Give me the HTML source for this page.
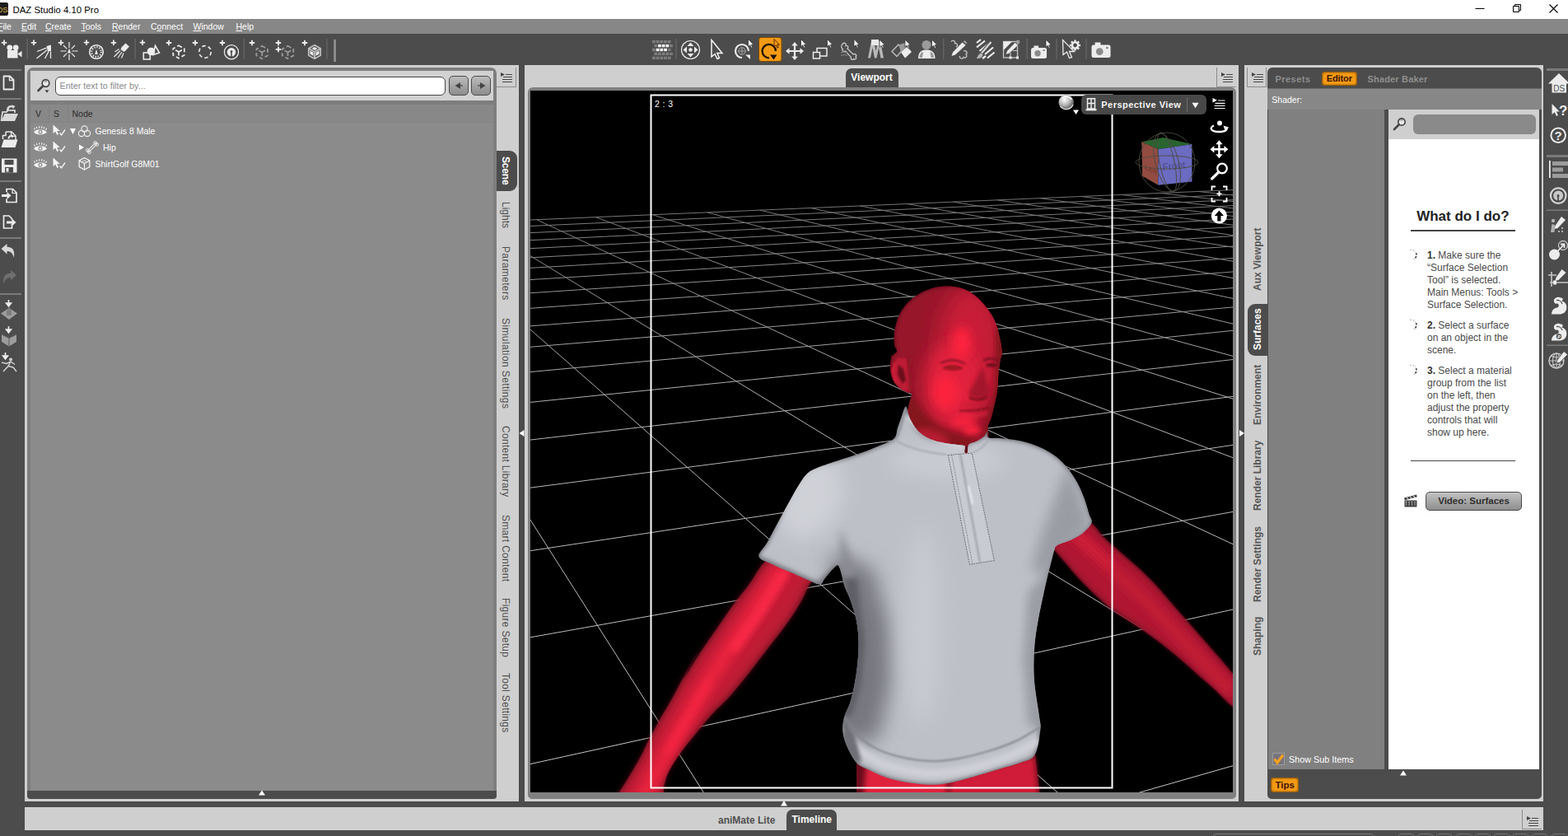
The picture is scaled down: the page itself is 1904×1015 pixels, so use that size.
<!DOCTYPE html><html><head><meta charset="utf-8"><title>DAZ Studio 4.10 Pro</title><style>

html,body{margin:0;padding:0}
body{width:1904px;height:1015px;overflow:hidden;background:#4c4c4c;position:relative;font-family:"Liberation Sans",sans-serif;font-size:10.5px;color:#fff}
.a{position:absolute}
#title{left:0;top:0;width:1904px;height:23px;background:#fff;color:#000}
#title .t{left:15.500px;top:5.500px;font-size:11.4px;white-space:nowrap}
#menu{left:0;top:23px;width:1904px;height:18px;background:#878787}
#menu span{position:absolute;top:3px;font-size:10.5px;color:#fff;white-space:nowrap}
#menu u{text-decoration:underline;text-underline-offset:1px}
#tb{left:0;top:41px;width:1904px;height:38px;background:#4c4c4c}
.sep{position:absolute;top:47px;width:1px;height:24px;background:#666}
.pane{position:absolute;background:#cfcfcf}
.vt{position:absolute;white-space:nowrap;font-size:11.5px;color:#555;transform-origin:0 0;letter-spacing:.1px}
.vt.r{transform:rotate(90deg)}
.vt.l{transform:rotate(-90deg)}
.menubtn{position:absolute;width:24px;height:24px;border-right:1px solid #8c8c8c;border-bottom:1px solid #8c8c8c;box-sizing:border-box}
#vp{position:absolute;left:644px;top:110px;width:853px;height:852px;background:#000;overflow:hidden}
.tip{font-size:12px;line-height:15px;color:#4a4a4a;white-space:nowrap}.tip b{color:#333}
</style></head><body>

<div id="title" class="a">
 <svg class="a" style="left:0;top:3px" width="10" height="16" viewBox="0 0 10 16"><rect x="-8" y="0" width="18" height="16" rx="2" fill="#1c1c1c"/><text x="-3.5" y="11.5" font-family="Liberation Sans, sans-serif" font-size="9.5" fill="#d8b040">DS</text></svg>
 <div class="a t">DAZ Studio 4.10 Pro</div>
 <svg class="a" style="left:1780px;top:0" width="124" height="23" viewBox="0 0 124 23">
  <path d="M11.5 10.5H22.5" stroke="#000" stroke-width="1"/>
  <path d="M57.5 7.5H64.5V14.5H57.5ZM59.5 7.5V5.5H66.5V12.5H64.5" stroke="#000" stroke-width="1" fill="none"/>
  <path d="M101.5 5.5L111.5 15.5M111.5 5.5L101.5 15.5" stroke="#000" stroke-width="1.1"/>
 </svg>
</div>
<div id="menu" class="a">
 <span style="left:-3px"><u>F</u>ile</span><span style="left:26px"><u>E</u>dit</span><span style="left:55px"><u>C</u>reate</span><span style="left:98.5px"><u>T</u>ools</span><span style="left:136px"><u>R</u>ender</span><span style="left:183px">C<u>o</u>nnect</span><span style="left:234.5px"><u>W</u>indow</span><span style="left:286.5px"><u>H</u>elp</span>
</div>
<div id="tb" class="a"></div>
<svg class="a" style="left:0;top:0;pointer-events:none" width="1904" height="1015" viewBox="0 0 1904 1015"><rect x="32.5" y="47" width="1.4" height="25" fill="#646464"/>
<rect x="163.5" y="47" width="1.4" height="25" fill="#646464"/>
<rect x="295.7" y="47" width="1.4" height="25" fill="#646464"/>
<rect x="396.3" y="47" width="1.4" height="25" fill="#646464"/>
<rect x="405.2" y="48" width="2.8" height="27" fill="#8e8e8e"/>
<rect x="820.3" y="47" width="1.4" height="25" fill="#646464"/>
<rect x="1145.0" y="47" width="1.4" height="25" fill="#646464"/>
<rect x="1246.5" y="47" width="1.4" height="25" fill="#646464"/>
<rect x="1282.3" y="47" width="1.4" height="25" fill="#646464"/>
<rect x="1318.3" y="47" width="1.4" height="25" fill="#646464"/>
<path d="M1.8 51.8H8.2M5.0 48.6V55.0" stroke="#ececec" stroke-width="1.8"/>
<circle cx="11.8" cy="57.8" r="3.4" fill="#ececec"/><circle cx="19.2" cy="57.8" r="3.4" fill="#ececec"/><rect x="9" y="61" width="12.5" height="9.5" fill="#ececec"/><path d="M21.5 65.5L26.5 61.8V69.5Z" fill="#ececec"/>
<path d="M37.8 51.8H44.2M41.0 48.6V55.0" stroke="#ececec" stroke-width="1.8"/>
<path d="M56.5 56L62 54.5V62L58 62.5Z" fill="#ececec"/><path d="M56.5 58.2L45 62.5M57 60.8L44.5 71M59 62.5L54.5 71M61.5 62.5V71" stroke="#ececec" stroke-width="1.3"/>
<path d="M70.8 51.8H77.2M74.0 48.6V55.0" stroke="#ececec" stroke-width="1.8"/>
<path d="M84 51V58M84 66V73M73.5 62H80.5M87.5 62H94.5M77 55L81.3 59.3M86.7 64.7L91 69M91 55L86.7 59.3M81.3 64.7L77 69" stroke="#ececec" stroke-width="1.2"/><path d="M84 58.5L86 64.5H82Z" fill="#ececec"/>
<path d="M101.8 51.6H108.2M105.0 48.4V54.8" stroke="#ececec" stroke-width="1.8"/>
<circle cx="117" cy="63" r="8.3" fill="none" stroke="#ececec" stroke-width="1.6"/><circle cx="117" cy="63" r="5.8" fill="none" stroke="#ececec" stroke-width="2.2" stroke-dasharray="1.3 1.7"/><path d="M117 59.5L118.8 66H115.2Z" fill="#ececec"/>
<path d="M134.8 51.8H141.2M138.0 48.6V55.0" stroke="#ececec" stroke-width="1.8"/>
<path d="M152.5 52.5L157 56.5L152.5 61.5L150.5 63L146.5 60L147.5 57.5Z" fill="#ececec"/><path d="M146 61.5L138.5 69M148 63L143 70.5M150 64.5L147.5 70.5M144.5 59.5L139.5 63" stroke="#ececec" stroke-width="1.2"/>
<path d="M169.8 51.6H176.2M173.0 48.4V54.8" stroke="#ececec" stroke-width="1.8"/>
<rect x="174.3" y="64" width="8" height="8" fill="none" stroke="#ececec" stroke-width="1.6"/><path d="M188.5 55.5L193.5 64L186 66.5Z" fill="none" stroke="#ececec" stroke-width="1.6"/><circle cx="183.5" cy="62.5" r="4.8" fill="#ececec"/>
<path d="M201.8 52.0H208.2M205.0 48.8V55.2" stroke="#ececec" stroke-width="1.8"/>
<path d="M217.0 55.2L223.8 59.1L223.8 66.9L217.0 70.8L210.2 66.9L210.2 59.1ZM217.0 63.0L223.8 59.1M217.0 63.0L210.2 59.1M217.0 63.0L217.0 70.8" fill="none" stroke="#ececec" stroke-width="1.7" stroke-dasharray="4.5 3" stroke-linejoin="round"/>
<path d="M233.8 52.0H240.2M237.0 48.8V55.2" stroke="#ececec" stroke-width="1.8"/>
<circle cx="249" cy="63" r="7.3" fill="none" stroke="#ececec" stroke-width="1.7" stroke-dasharray="4.5 3.1"/>
<path d="M266.8 52.0H273.2M270.0 48.8V55.2" stroke="#ececec" stroke-width="1.8"/>
<circle cx="281" cy="63.2" r="8.6" fill="none" stroke="#ececec" stroke-width="1.2"/><circle cx="281" cy="63.2" r="5.2" fill="#ececec"/><path d="M281 63V69" stroke="#4c4c4c" stroke-width="1.6"/><circle cx="281" cy="62.6" r="1.4" fill="#4c4c4c"/>
<path d="M302.8 52.0H309.2M306.0 48.8V55.2" stroke="#ececec" stroke-width="1.8"/>
<path d="M318.2 55.7L325.0 59.6L325.0 67.4L318.2 71.3L311.4 67.4L311.4 59.6ZM318.2 63.5L325.0 59.6M318.2 63.5L311.4 59.6M318.2 63.5L318.2 71.3" fill="none" stroke="#9a9a9a" stroke-width="1.8" stroke-dasharray="4.5 3" stroke-linejoin="round"/>
<path d="M334.8 52.0H341.2M338.0 48.8V55.2" stroke="#ececec" stroke-width="1.8"/>
<path d="M334.8 60.0H341.2M338.0 56.8V63.2" stroke="#ececec" stroke-width="1.8"/>
<path d="M349.5 55.7L356.3 59.6L356.3 67.4L349.5 71.3L342.7 67.4L342.7 59.6ZM349.5 63.5L356.3 59.6M349.5 63.5L342.7 59.6M349.5 63.5L349.5 71.3" fill="none" stroke="#9a9a9a" stroke-width="1.8" stroke-dasharray="4.5 3" stroke-linejoin="round"/>
<path d="M366.8 52.0H373.2M370.0 48.8V55.2" stroke="#ececec" stroke-width="1.8"/>
<path d="M382.0 54.7L389.2 58.9L389.2 67.2L382.0 71.3L374.8 67.2L374.8 58.9ZM382.0 63.0L389.2 58.9M382.0 63.0L374.8 58.9M382.0 63.0L382.0 71.3" fill="none" stroke="#bdbdbd" stroke-width="1.8" stroke-linejoin="round"/>
<path d="M382 57L385.5 59L382 61L378.5 59Z" fill="#ececec"/><path d="M376.5 61.5L380.5 63.8V68L376.5 65.5Z" fill="#ececec"/><path d="M387.5 61.5L383.5 63.8V68L387.5 65.5Z" fill="#ececec"/>
<rect x="792.0" y="49.0" width="3.8" height="3.4" fill="#7c7c7c"/>
<rect x="796.7" y="49.0" width="3.8" height="3.4" fill="#7c7c7c"/>
<rect x="801.4" y="49.0" width="3.8" height="3.4" fill="#7c7c7c"/>
<rect x="806.1" y="49.0" width="3.8" height="3.4" fill="#7c7c7c"/>
<rect x="810.8" y="49.0" width="3.8" height="3.4" fill="#7c7c7c"/>
<rect x="794.3" y="53.9" width="3.8" height="3.4" fill="#7c7c7c"/>
<rect x="799.0" y="53.9" width="3.8" height="3.4" fill="#f2f2f2"/>
<rect x="803.7" y="53.9" width="3.8" height="3.4" fill="#f2f2f2"/>
<rect x="808.4" y="53.9" width="3.8" height="3.4" fill="#f2f2f2"/>
<rect x="813.1" y="53.9" width="3.8" height="3.4" fill="#7c7c7c"/>
<rect x="792.0" y="58.8" width="3.8" height="3.4" fill="#7c7c7c"/>
<rect x="796.7" y="58.8" width="3.8" height="3.4" fill="#f2f2f2"/>
<rect x="801.4" y="58.8" width="3.8" height="3.4" fill="#f2f2f2"/>
<rect x="806.1" y="58.8" width="3.8" height="3.4" fill="#f2f2f2"/>
<rect x="810.8" y="58.8" width="3.8" height="3.4" fill="#7c7c7c"/>
<rect x="794.3" y="63.7" width="3.8" height="3.4" fill="#7c7c7c"/>
<rect x="799.0" y="63.7" width="3.8" height="3.4" fill="#7c7c7c"/>
<rect x="803.7" y="63.7" width="3.8" height="3.4" fill="#7c7c7c"/>
<rect x="808.4" y="63.7" width="3.8" height="3.4" fill="#7c7c7c"/>
<rect x="813.1" y="63.7" width="3.8" height="3.4" fill="#7c7c7c"/>
<rect x="792.0" y="68.6" width="3.8" height="3.4" fill="#7c7c7c"/>
<rect x="796.7" y="68.6" width="3.8" height="3.4" fill="#7c7c7c"/>
<rect x="801.4" y="68.6" width="3.8" height="3.4" fill="#7c7c7c"/>
<rect x="806.1" y="68.6" width="3.8" height="3.4" fill="#7c7c7c"/>
<rect x="810.8" y="68.6" width="3.8" height="3.4" fill="#7c7c7c"/>
<circle cx="838.5" cy="60.5" r="11" fill="none" stroke="#ececec" stroke-width="1.2"/>
<path d="M838.5 51.5l4 4.5h-8ZM838.5 69.5l4 -4.5h-8ZM829.5 60.5l4.5 -4v8ZM847.5 60.5l-4.5 -4v8Z" fill="#ececec"/><circle cx="838.5" cy="60.5" r="2.2" fill="#ececec"/>
<path d="M864 48.5V69L868 65.5L871 71.5L873.5 70.3L870.8 64.5H877Z" fill="#4c4c4c" stroke="#fff" stroke-width="1.4" stroke-linejoin="miter"/>
<path d="M909 62A8 8 0 1 0 901 70" fill="none" stroke="#ececec" stroke-width="2.2"/><path d="M905 66.5H911V72Z" fill="#ececec"/><circle cx="901" cy="62" r="4.2" fill="none" stroke="#aaa" stroke-width="1"/><path d="M901 57.5V66.5M896.5 62H905.5" stroke="#aaa" stroke-width="1"/>
<path d="M908.5 47.5L908.5 56.9L910.7 54.8L912.4 58.2L913.8 57.5L912.2 54.3L915.0 54.3Z" fill="#fff" stroke="#333" stroke-width="0.8"/>
<rect x="921.5" y="45.5" width="27.5" height="29" rx="3" fill="#f39a14" stroke="#7a4a08" stroke-width="1"/>
<path d="M942 62A8.2 8.2 0 1 0 934 70.3" fill="none" stroke="#1e1208" stroke-width="2.3"/><path d="M935 66.5H943.5L939.5 72.5Z" fill="#1e1208"/>
<path d="M940.0 47.5L940.0 56.9L942.2 54.8L943.9 58.2L945.3 57.5L943.7 54.3L946.5 54.3Z" fill="#f39a14" stroke="#3a1208" stroke-width="0.8"/>
<path d="M965.0 54.0V70.0M957.0 62.0H973.0" stroke="#ececec" stroke-width="2.2"/>
<path d="M965.0 51.0l3.8 4.5h-7.6ZM965.0 73.0l3.8 -4.5h-7.6ZM954.0 62.0l4.5 -3.8v7.6ZM976.0 62.0l-4.5 -3.8v7.6Z" fill="#ececec"/>
<path d="M972.5 47.5L972.5 56.9L974.7 54.8L976.4 58.2L977.8 57.5L976.2 54.3L979.0 54.3Z" fill="#fff" stroke="#333" stroke-width="0.8"/>
<rect x="992" y="58.5" width="12" height="9.5" fill="none" stroke="#ececec" stroke-width="1.5"/><rect x="987.5" y="63.5" width="8" height="7.5" fill="#4c4c4c" stroke="#ececec" stroke-width="1.5"/>
<path d="M1004.5 47.5L1004.5 56.9L1006.7 54.8L1008.4 58.2L1009.8 57.5L1008.2 54.3L1011.0 54.3Z" fill="#fff" stroke="#333" stroke-width="0.8"/>
<path d="M1023 53.5C1025 51 1028.5 53 1027 55.5C1029.5 55 1031 57.5 1029 59L1036 66C1038.5 64.5 1041 67 1039 69C1041 70.5 1038 73.5 1036.5 71.5C1035.5 73.5 1032 72 1033.5 69.5L1026.5 62C1024 63.5 1021.5 61 1023.5 59.5C1021 58.5 1021.5 55 1023 53.5Z" fill="none" stroke="#c8c8c8" stroke-width="1.3"/>
<path d="M1021 64q4 -2 8 0M1021 67.5q4 -2 8 0" stroke="#8a8a8a" stroke-width="1" fill="none"/>
<path d="M1037.0 47.5L1037.0 56.9L1039.2 54.8L1040.9 58.2L1042.3 57.5L1040.7 54.3L1043.5 54.3Z" fill="#fff" stroke="#333" stroke-width="0.8"/>
<path d="M1054 70.5L1058 50H1061.5L1063.5 62L1066 50H1069L1073 70.5H1069.5L1067 58L1064.5 70.5H1062L1059.5 58L1057 70.5Z" fill="#b8b8b8"/><rect x="1058" y="48" width="9" height="7" fill="#e8e8e8"/>
<path d="M1068.0 48.0L1068.0 57.4L1070.2 55.3L1071.9 58.7L1073.3 58.0L1071.7 54.8L1074.5 54.8Z" fill="#fff" stroke="#333" stroke-width="0.8"/>
<path d="M1083 62.5L1091 54L1097 59.5L1089 68.5Z" fill="none" stroke="#c0c0c0" stroke-width="1.4"/><path d="M1091 54.5L1099 52L1101 60L1094 63Z" fill="#9a9a9a"/><path d="M1094 63.5L1101.5 57L1107 63L1099 70.5Z" fill="#ececec"/>
<path d="M1099.0 48.0L1099.0 57.4L1101.2 55.3L1102.9 58.7L1104.3 58.0L1102.7 54.8L1105.5 54.8Z" fill="#fff" stroke="#333" stroke-width="0.8"/>
<circle cx="1125" cy="54.5" r="5.6" fill="#9a9a9a"/><path d="M1115 71C1115 63 1119 60.5 1125 60.5C1131 60.5 1135.5 63 1135.5 71Z" fill="#ececec"/><path d="M1116.5 70C1117 65 1118.5 63.5 1121 63L1120 70ZM1134 70C1133.5 65 1132 63.5 1129.5 63L1130.5 70Z" fill="#9a9a9a"/>
<path d="M1131.5 48.0L1131.5 57.4L1133.7 55.3L1135.4 58.7L1136.8 58.0L1135.2 54.8L1138.0 54.8Z" fill="#fff" stroke="#333" stroke-width="0.8"/>
<path d="M1155 50.5c2.5-3 6 0 4 2.5c3-1.5 5 2.5 2 4M1170 62c3-1.5 5.500 2 3 4c2.5 2-1 5.500-3 3.500c-1 3-5.500 1.500-4.500-1.500" fill="none" stroke="#c8c8c8" stroke-width="1.3"/><path d="M1168.500 51.500L1172.500 55L1160 66.500L1155.500 68L1157 63.500Z" fill="#ececec"/><path d="M1169.500 50.500L1171.500 49L1174.500 51.800L1173.200 53.800Z" fill="#9a9a9a"/>
<path d="M1186 52L1191 48M1186 57.500L1196 49.500M1189.500 62L1202 51.500M1196 66L1206 57.500M1199 70.500L1207.500 63.500M1193 71L1197 68" stroke="#ececec" stroke-width="2.200"/>
<path d="M1203 51.500L1190.500 66.500" stroke="#4c4c4c" stroke-width="4.500"/><path d="M1203.500 51L1192 64.500" stroke="#d8d8d8" stroke-width="2.200"/><path d="M1191.500 64.500C1188 65 1187.500 69 1185.500 71C1189 71.500 1193 70 1193.500 66.500Z" fill="#b8b8b8"/>
<rect x="1218.5" y="50.5" width="17" height="19.500" fill="none" stroke="#c8c8c8" stroke-width="1.300"/><path d="M1218.500 50.500H1229L1218.500 61Z" fill="#ececec"/><path d="M1227 61.500V70M1227 61.500H1235.500" stroke="#c8c8c8" stroke-width="1.200"/><path d="M1232.500 51.500L1236.500 55L1225.500 65L1221 66.500L1222.500 62Z" fill="#ececec" stroke="#4c4c4c" stroke-width="0.800"/><circle cx="1236" cy="51" r="2.400" fill="#9a9a9a"/><rect x="1225.500" y="68.500" width="3" height="3" fill="#ececec"/><rect x="1234" y="68.500" width="3" height="3" fill="#ececec"/>
<rect x="1252.0" y="58.0" width="19.0" height="13.0" rx="2.500" fill="#ececec"/><rect x="1255.4" y="55.5" width="5.7" height="4.6" fill="#ececec"/><circle cx="1260.0" cy="64.8" r="3.7" fill="#8a8a8a"/><rect x="1266.4" y="60.1" width="2.3" height="1.9" fill="#8a8a8a"/>
<path d="M1270.0 48.0L1270.0 57.4L1272.2 55.3L1273.9 58.7L1275.3 58.0L1273.7 54.8L1276.5 54.8Z" fill="#fff" stroke="#333" stroke-width="0.8"/>
<path d="M1290.500 48.500L1291 66.500L1295.500 63L1298.500 70.500L1301.500 69.500L1298.500 62.500H1304.500Z" fill="none" stroke="#ececec" stroke-width="1.300"/>
<path d="M1308.6 55.0L1312.0 55.0" stroke="#ececec" stroke-width="2.400"/><path d="M1307.7 57.2L1310.1 59.6" stroke="#ececec" stroke-width="2.400"/><path d="M1305.5 58.1L1305.5 61.5" stroke="#ececec" stroke-width="2.400"/><path d="M1303.3 57.2L1300.9 59.6" stroke="#ececec" stroke-width="2.400"/><path d="M1302.4 55.0L1299.0 55.0" stroke="#ececec" stroke-width="2.400"/><path d="M1303.3 52.8L1300.9 50.4" stroke="#ececec" stroke-width="2.400"/><path d="M1305.5 51.9L1305.5 48.5" stroke="#ececec" stroke-width="2.400"/><path d="M1307.7 52.8L1310.1 50.4" stroke="#ececec" stroke-width="2.400"/><circle cx="1305.5" cy="55.0" r="3.6" fill="none" stroke="#ececec" stroke-width="2.400"/>
<rect x="1325.5" y="54.5" width="23.0" height="15.5" rx="2.500" fill="#ececec"/><rect x="1329.6" y="51.5" width="6.9" height="5.5" fill="#ececec"/><circle cx="1335.2" cy="62.6" r="4.4" fill="#8a8a8a"/><rect x="1343.0" y="57.0" width="2.8" height="2.2" fill="#8a8a8a"/><rect x="0" y="84" width="26" height="2" fill="#7a7a7a"/>
<rect x="0" y="119" width="26" height="2" fill="#7a7a7a"/>
<rect x="0" y="219" width="26" height="2" fill="#7a7a7a"/>
<rect x="0" y="288" width="26" height="2" fill="#7a7a7a"/>
<rect x="0" y="356" width="26" height="2" fill="#7a7a7a"/>
<path d="M4.500 92.500H12L16.500 97V108.500H4.500Z" fill="none" stroke="#ececec" stroke-width="1.800" stroke-linejoin="round"/><path d="M11.500 92.500V97.500H16.500" fill="none" stroke="#ececec" stroke-width="1.400"/>
<path d="M1.500 147L3 136H8L9.500 134H18V137" fill="none" stroke="#ececec" stroke-width="1.500"/><path d="M1.500 147L5.500 138H22L18 147Z" fill="#d8d8d8"/><path d="M8 134C8 129 12 127 15 128.500L14 127L18.500 129L15.500 132.500L15.200 130.500C13 129.500 10.500 131 10.500 134Z" fill="#d8d8d8"/>
<path d="M7 160H14L19 165V170M3.500 169V164.500H7V160" fill="none" stroke="#ececec" stroke-width="1.500"/><path d="M13.500 160V165.500H19" fill="none" stroke="#ececec" stroke-width="1.200"/><path d="M1.500 179L4.500 169.500H21.500L18.500 179Z" fill="#ececec"/><path d="M9.500 168.500C9.500 165 12 163.500 14 164.500L13.500 163L17 165L14.500 168L14.300 166.200C12.800 165.800 11.500 166.800 11.500 168.500Z" fill="#ececec"/>
<path d="M2 192.500H20.500V209.500H2Z" fill="#ececec"/><rect x="5.500" y="194" width="11" height="6" fill="#4c4c4c"/><rect x="6" y="203" width="10" height="6.500" fill="#4c4c4c"/><rect x="7.500" y="204" width="3" height="4.500" fill="#ececec"/>
<path d="M8 233V229.500H15.500L20 234V245.500H8V241.500" fill="none" stroke="#ececec" stroke-width="1.700"/><path d="M15 229.500V234.500H20" fill="none" stroke="#ececec" stroke-width="1.200"/><path d="M2 236H8.500V233L13.500 237.500L8.500 242V239H2Z" fill="#ececec"/>
<path d="M14.500 272V277H4.500V262H11L14.500 265.500V267" fill="none" stroke="#ececec" stroke-width="1.700"/><path d="M8 268.500H14.500V265.500L19.500 270L14.500 274.500V271.500H8Z" fill="#ececec"/>
<path d="M1.500 302L8.500 296V299.800C14.500 299.800 18.500 303 17 313C15.500 307.500 13 305 8.500 305V308.500Z" fill="#d8d8d8"/>
<path d="M20 334L13 328V331.800C7 331.800 3 335 4.500 345C6 339.500 8.500 337 13 337V340.500Z" fill="#6e6e6e"/>
<path d="M10.500 364V370M7.500 368L10.500 372L13.500 368Z" stroke="#ececec" stroke-width="1.600" fill="#ececec"/><path d="M1 380.500L11 374L21 380.500L11 388Z" fill="#9c9c9c"/><path d="M8 378L11 372.500L14 378V383H8Z" fill="#7e7e7e"/>
<path d="M10.500 396V402M7.500 400L10.500 404L13.500 400Z" stroke="#ececec" stroke-width="1.600" fill="#ececec"/><path d="M2 406L11 410.500L20 406V415L11 420.500L2 415Z" fill="#9c9c9c"/><path d="M11 410.500V420M2 406L11 410.500L20 406" stroke="#5c5c5c" stroke-width="1" fill="none"/>
<path d="M6.500 428V434M3.500 432L6.500 436L9.500 432Z" stroke="#ececec" stroke-width="1.600" fill="#ececec"/><circle cx="13" cy="436.500" r="2" fill="#d0d0d0"/><path d="M2 440L8 441.500L13 439L18 442.500M13 439L10 444.500L4 451M10 444.500L16 446L20 451" stroke="#d0d0d0" stroke-width="1.500" fill="none"/><rect x="1878" y="83" width="26" height="3" fill="#7a7a7a"/>
<rect x="1878" y="188" width="26" height="3" fill="#7a7a7a"/>
<rect x="1878" y="254.5" width="26" height="1.5" fill="#7a7a7a"/>
<rect x="1878" y="418.5" width="26" height="1.5" fill="#7a7a7a"/>
<path d="M1880 101.500L1893 89L1906 101.500Z" fill="#ececec"/><rect x="1884.500" y="100" width="17.500" height="12.500" fill="#ececec"/><text x="1886.300" y="110.800" font-family="Liberation Sans, sans-serif" font-size="10" fill="#4c4c4c">DS</text>
<path d="M1884.500 126V139L1887.700 136.300L1890 141L1892 140L1889.800 135.500H1893.700Z" fill="#ececec"/><text x="1893" y="140" font-family="Liberation Sans, sans-serif" font-weight="700" font-size="17" fill="#ececec">?</text>
<circle cx="1892.200" cy="164.300" r="8.800" fill="none" stroke="#ececec" stroke-width="2"/><text x="1887.600" y="170" font-family="Liberation Sans, sans-serif" font-weight="700" font-size="15" fill="#ececec">?</text>
<rect x="1881" y="195" width="1.800" height="21" fill="#ececec"/><rect x="1885" y="196" width="19" height="5" fill="#9c9c9c"/><rect x="1885" y="203.500" width="13" height="5" fill="#9c9c9c"/><rect x="1885" y="211" width="19" height="5" fill="#9c9c9c"/>
<circle cx="1892.200" cy="237.600" r="9.300" fill="none" stroke="#d4d4d4" stroke-width="2.200"/><circle cx="1892.200" cy="237.600" r="6" fill="#c8c8c8"/><path d="M1892 238V245" stroke="#4c4c4c" stroke-width="1.800"/><circle cx="1892" cy="237.500" r="1.600" fill="#4c4c4c"/>
<path d="M1896 263L1901 267L1891.500 277L1887.500 278L1888.500 274Z" fill="#ececec"/><circle cx="1886" cy="268" r="2.200" fill="#b0b0b0"/><path d="M1883 282L1884.500 272L1888 273L1887.500 282" fill="#b0b0b0"/><path d="M1892 280h2v2h-2zM1896 280h2v2h-2zM1896 276h2v2h-2z" fill="#b0b0b0"/>
<circle cx="1887.500" cy="309" r="6.500" fill="#ececec"/><circle cx="1898" cy="298" r="5.500" fill="none" stroke="#c8c8c8" stroke-width="1.300"/><path d="M1890 306.500L1899 297M1895 296.500H1899.500V301" stroke="#ececec" stroke-width="1.800" fill="none"/>
<path d="M1896.500 327L1901.500 331L1892.500 340L1888.500 341L1889.500 337Z" fill="#ececec"/><path d="M1884 330V348M1880 334H1890M1882 343H1904" stroke="#c8c8c8" stroke-width="1.600"/><rect x="1886" y="340.500" width="4" height="5" fill="#ececec"/>
<path d="M1887 366.0C1886 362.0 1892 359.5 1895 361.5C1898.500 361.0 1898.500 365.0 1895.500 366.0C1899 365.0 1902.800 369.0 1902.300 374.0C1902 379.0 1898 381.5 1893 381.5L1884 381.5C1884 377.0 1887 374.0 1891 373.5C1893.500 372.0 1893.500 369.5 1891 368.5C1889 369.0 1887 368.0 1887 366.0Z" fill="#ececec"/>
<path d="M1890 364.5C1893 364.0 1896 366.0 1897 369.0" stroke="#4c4c4c" stroke-width="1.300" fill="none"/>
<path d="M1887 398.0C1886 394.0 1892 391.5 1895 393.5C1898.500 393.0 1898.500 397.0 1895.500 398.0C1899 397.0 1902.800 401.0 1902.300 406.0C1902 411.0 1898 413.5 1893 413.5L1884 413.5C1884 409.0 1887 406.0 1891 405.5C1893.500 404.0 1893.500 401.5 1891 400.5C1889 401.0 1887 400.0 1887 398.0Z" fill="#ececec"/>
<path d="M1890 396.5C1893 396.0 1896 398.0 1897 401.0" stroke="#4c4c4c" stroke-width="1.300" fill="none"/>
<circle cx="1893" cy="408.5" r="3.200" fill="#4c4c4c"/><text x="1891.300" y="410.5" font-family="Liberation Sans, sans-serif" font-weight="700" font-style="italic" font-size="5.500" fill="#fff">P</text>
<circle cx="1890" cy="438" r="9" fill="none" stroke="#c8c8c8" stroke-width="1.500"/><path d="M1881 438H1899M1890 429V447M1883.500 432Q1890 436 1896.500 432M1883.500 444Q1890 440 1896.500 444" stroke="#c8c8c8" stroke-width="1.100" fill="none"/><ellipse cx="1890" cy="438" rx="4.500" ry="9" fill="none" stroke="#c8c8c8" stroke-width="1.100"/><path d="M1899 426.500L1903.500 430.500L1894 440L1890 441L1891 437Z" fill="#ececec" stroke="#4c4c4c" stroke-width="0.800"/></svg>

<div class="pane" style="left:30px;top:79px;width:600px;height:894px"></div>
<div class="a" style="left:33px;top:82px;width:570px;height:888px;background:#7e7e7e;border-radius:7px 7px 4px 4px;overflow:hidden">
  <div class="a" style="left:4px;top:4px;width:562px;height:36px;background:#d2d2d2"></div>
  <div class="a" style="left:4px;top:45px;width:562px;height:833px;background:#8b8b8b"></div>
  <div class="a" style="left:4px;top:45px;width:562px;height:21px;background:#888;border-bottom:1px solid #838383"></div>
  <div class="a" style="left:26px;top:47px;width:1px;height:18px;background:#818181"></div>
  <div class="a" style="left:48.500px;top:47px;width:1px;height:18px;background:#818181"></div>
  <div class="a" style="left:0;top:878px;width:570px;height:10px;background:#4c4c4c"></div>
</div>
<svg class="a" style="left:313px;top:958px" width="10" height="8" viewBox="0 0 10 8"><path d="M1 7.500L5 1.500L9 7.500Z" fill="#fff"/></svg>
<svg class="a" style="left:44px;top:94px" width="20" height="20" viewBox="0 0 20 20"><circle cx="11.500" cy="7" r="4.300" fill="#e8e8e8" stroke="#444" stroke-width="1.700"/><path d="M8.300 10.300L2.500 16" stroke="#444" stroke-width="2.600" stroke-linecap="round"/><path d="M10 5.500A2.500 2.500 0 0 1 13 5" stroke="#444" stroke-width="0.800" fill="none"/><path d="M10.500 15.500H15.500L13 18.500Z" fill="#333"/></svg>
<div class="a" style="left:67px;top:92.500px;width:474px;height:23px;box-sizing:border-box;border:1.500px solid #454545;border-radius:6px;background:#fff"></div>
<div class="a" style="left:72.500px;top:98px;font-size:10.800px;color:#8a8a8a;white-space:nowrap">Enter text to filter by...</div>
<div class="a" style="left:545px;top:92px;width:24px;height:24px;box-sizing:border-box;border:1px solid #4c4c4c;border-radius:5px;background:linear-gradient(#bcbcbc,#8c8c8c)"><svg class="a" style="left:6px;top:6px" width="11" height="10" viewBox="0 0 11 10"><path d="M0.500 5L7 1V9Z" fill="#444"/><path d="M5 5H10" stroke="#444" stroke-width="1.200"/></svg></div>
<div class="a" style="left:572px;top:92px;width:24px;height:24px;box-sizing:border-box;border:1px solid #4c4c4c;border-radius:5px;background:linear-gradient(#bcbcbc,#8c8c8c)"><svg class="a" style="left:6px;top:6px" width="11" height="10" viewBox="0 0 11 10"><path d="M10.500 5L4 1V9Z" fill="#444"/><path d="M1 5H6" stroke="#444" stroke-width="1.200"/></svg></div>
<div class="a" style="left:43px;top:132px;font-size:10.500px;color:#2a2a2a">V</div>
<div class="a" style="left:65px;top:132px;font-size:10.500px;color:#2a2a2a">S</div>
<div class="a" style="left:87.500px;top:132px;font-size:10.500px;color:#2a2a2a">Node</div>
<svg class="a" style="left:40px;top:152px" width="18" height="13" viewBox="0 0 18 13"><path d="M1 8.500C4 4.500 13 4 17 8.500C13 12.500 4.500 12.500 1 8.500Z" fill="#f4f4f4"/><circle cx="9" cy="8.300" r="2.500" fill="#8b8b8b"/><circle cx="9" cy="8.300" r="1.200" fill="#f4f4f4"/><path d="M2.500 5.500L1.500 3.500M5 4.200L4.300 2M7.700 3.600V1.200M10.500 3.600L11 1.200M13 4.300L14 2.200M15.300 5.600L16.800 3.800" stroke="#f4f4f4" stroke-width="1.100"/></svg>
<svg class="a" style="left:63px;top:151px" width="18" height="15" viewBox="0 0 18 15"><path d="M1.500 0.500V11L4.300 8.800L6.300 13L8.200 12L6.200 8H9.800Z" fill="#f4f4f4"/><path d="M9.500 10.500L11.500 12.800L16 6.500" fill="none" stroke="#f4f4f4" stroke-width="1.400"/></svg>
<div class="a" style="left:115.5px;top:153px;font-size:10.500px;white-space:nowrap;color:#fff">Genesis 8 Male</div>
<svg class="a" style="left:40px;top:172px" width="18" height="13" viewBox="0 0 18 13"><path d="M1 8.500C4 4.500 13 4 17 8.500C13 12.500 4.500 12.500 1 8.500Z" fill="#f4f4f4"/><circle cx="9" cy="8.300" r="2.500" fill="#8b8b8b"/><circle cx="9" cy="8.300" r="1.200" fill="#f4f4f4"/><path d="M2.500 5.500L1.500 3.500M5 4.200L4.300 2M7.700 3.600V1.200M10.500 3.600L11 1.200M13 4.300L14 2.200M15.300 5.600L16.800 3.800" stroke="#f4f4f4" stroke-width="1.100"/></svg>
<svg class="a" style="left:63px;top:171px" width="18" height="15" viewBox="0 0 18 15"><path d="M1.500 0.500V11L4.300 8.800L6.300 13L8.200 12L6.200 8H9.800Z" fill="#f4f4f4"/><path d="M9.500 10.500L11.500 12.800L16 6.500" fill="none" stroke="#f4f4f4" stroke-width="1.400"/></svg>
<div class="a" style="left:125.0px;top:173px;font-size:10.500px;white-space:nowrap;color:#fff">Hip</div>
<svg class="a" style="left:40px;top:192px" width="18" height="13" viewBox="0 0 18 13"><path d="M1 8.500C4 4.500 13 4 17 8.500C13 12.500 4.500 12.500 1 8.500Z" fill="#f4f4f4"/><circle cx="9" cy="8.300" r="2.500" fill="#8b8b8b"/><circle cx="9" cy="8.300" r="1.200" fill="#f4f4f4"/><path d="M2.500 5.500L1.500 3.500M5 4.200L4.300 2M7.700 3.600V1.200M10.500 3.600L11 1.200M13 4.300L14 2.200M15.300 5.600L16.800 3.800" stroke="#f4f4f4" stroke-width="1.100"/></svg>
<svg class="a" style="left:63px;top:191px" width="18" height="15" viewBox="0 0 18 15"><path d="M1.500 0.500V11L4.300 8.800L6.300 13L8.200 12L6.200 8H9.800Z" fill="#f4f4f4"/><path d="M9.500 10.500L11.500 12.800L16 6.500" fill="none" stroke="#f4f4f4" stroke-width="1.400"/></svg>
<div class="a" style="left:115.5px;top:193px;font-size:10.500px;white-space:nowrap;color:#fff">ShirtGolf G8M01</div>
<svg class="a" style="left:84px;top:150px" width="40" height="60" viewBox="84 150 40 60"><path d="M85 156H92L88.500 163Z" fill="#fff"/><circle cx="102.500" cy="156.500" r="3.600" fill="none" stroke="#f0f0f0" stroke-width="1.100"/><circle cx="99" cy="162" r="3.600" fill="none" stroke="#f0f0f0" stroke-width="1.100"/><circle cx="106" cy="162" r="3.600" fill="none" stroke="#f0f0f0" stroke-width="1.100"/><path d="M96 175.500V182.500L102 179Z" fill="#fff"/><path d="M107.500 183.500L116.500 174.500" stroke="#f0f0f0" stroke-width="3.400" stroke-linecap="round"/><path d="M107.500 183.500L116.500 174.500" stroke="#8b8b8b" stroke-width="1.400" stroke-linecap="round"/><circle cx="106.300" cy="182.500" r="1.800" fill="none" stroke="#f0f0f0" stroke-width="1"/><circle cx="108.500" cy="184.800" r="1.800" fill="none" stroke="#f0f0f0" stroke-width="1"/><circle cx="115.500" cy="173.300" r="1.800" fill="none" stroke="#f0f0f0" stroke-width="1"/><circle cx="117.800" cy="175.500" r="1.800" fill="none" stroke="#f0f0f0" stroke-width="1"/><path d="M102.500 191.500L108.800 195V202.500L102.500 206L96.200 202.500V195Z" fill="none" stroke="#f4f4f4" stroke-width="1.300"/><path d="M96.200 195L102.500 198.500L108.800 195M102.500 198.500V206" stroke="#f4f4f4" stroke-width="1.100" fill="none"/><path d="M99 196.800L102.500 194.800L106 196.800" stroke="#f4f4f4" stroke-width="0.900" fill="none"/></svg><div class="menubtn" style="left:603px;top:82px"><svg class="a" style="left:5px;top:6px" width="15" height="12" viewBox="0 0 15 12"><path d="M0 0L5 2.5L0 5Z" fill="#444"/><path d="M6 2.5H14M3 5.5H14M2 8.5H14M2 11.5H14" stroke="#444" stroke-width="1"/></svg></div>
<div class="a" style="left:602.500px;top:182.500px;width:25px;height:49.500px;background:#4c4c4c;border-radius:0 9px 9px 0"></div>
<div class="vt r" style="left:620.5px;top:189.5px;color:#fff;font-weight:700;letter-spacing:-0.20px;font-size:12.0px">Scene</div><div class="vt r" style="left:620.5px;top:244.5px;color:#4f4f4f;font-weight:400;letter-spacing:0.00px;font-size:12.0px">Lights</div><div class="vt r" style="left:620.5px;top:299.4px;color:#4f4f4f;font-weight:400;letter-spacing:0.36px;font-size:12.0px">Parameters</div><div class="vt r" style="left:620.5px;top:386.3px;color:#4f4f4f;font-weight:400;letter-spacing:0.40px;font-size:12.0px">Simulation Settings</div><div class="vt r" style="left:620.5px;top:517.0px;color:#4f4f4f;font-weight:400;letter-spacing:0.30px;font-size:12.0px">Content Library</div><div class="vt r" style="left:620.5px;top:625.0px;color:#4f4f4f;font-weight:400;letter-spacing:0.30px;font-size:12.0px">Smart Content</div><div class="vt r" style="left:620.5px;top:726.0px;color:#4f4f4f;font-weight:400;letter-spacing:0.30px;font-size:12.0px">Figure Setup</div><div class="vt r" style="left:620.5px;top:817.0px;color:#4f4f4f;font-weight:400;letter-spacing:0.30px;font-size:12.0px">Tool Settings</div>
<svg class="a" style="left:629px;top:521px" width="8" height="10" viewBox="0 0 8 10"><path d="M7.500 1L1.500 5L7.500 9Z" fill="#fff"/></svg>


<div class="pane" style="left:637px;top:79px;width:867px;height:894px"></div>
<div class="a" style="left:1027px;top:82.500px;width:63.500px;height:26px;background:#4c4c4c;border-radius:7px 7px 0 0"></div>
<div class="a" style="left:1033.300px;top:87px;font-size:12px;font-weight:700;color:#fff">Viewport</div>
<div class="a" style="left:640.500px;top:106px;width:860px;height:863.500px;background:#808080;border-radius:6px 6px 5px 5px"></div>
<div class="menubtn" style="left:1477px;top:82px;border-right:none;border-left:1px solid #8c8c8c"><svg class="a" style="left:5px;top:6px" width="15" height="12" viewBox="0 0 15 12"><path d="M0 0L5 2.500L0 5Z" fill="#444"/><path d="M6 2.500H14M3 5.500H14M2 8.500H14M2 11.500H14" stroke="#444" stroke-width="1"/></svg></div>
<svg class="a" style="left:947px;top:971px" width="10" height="8" viewBox="0 0 10 8"><path d="M1 7.500L5 1L9 7.500Z" fill="#fff"/></svg>
<svg class="a" style="left:1504px;top:521px" width="8" height="10" viewBox="0 0 8 10"><path d="M1 1L7 5L1 9Z" fill="#fff"/></svg>

<div id="vp"><svg width="853" height="852" viewBox="644 110 853 852" style="position:absolute;left:0;top:0;display:block"><rect x="644" y="110" width="853" height="852" fill="#000"/><defs><linearGradient id="gg" gradientUnits="userSpaceOnUse" x1="0" y1="225" x2="0" y2="960"><stop offset="0" stop-color="#6c6c6c"/><stop offset="0.14" stop-color="#8a8a8a"/><stop offset="0.35" stop-color="#b0b0b0"/><stop offset="1" stop-color="#c6c6c6"/></linearGradient></defs><path d="M-42.5 296.3L2288.6 196.9M-60.6 305.9L2335.1 198.9M-80.6 316.6L2383.8 201.1M-103.0 328.5L2434.9 203.4M-128.1 341.8L2488.6 205.8M-156.3 356.8L2545.1 208.4M-188.5 373.9L2604.6 211.0M-225.4 393.6L2667.3 213.9M-268.3 416.4L2733.6 216.8M-318.5 443.1L2803.7 220.0M-378.3 474.8L2878.0 223.3M-450.6 513.3L2956.8 226.9M-539.8 560.7L3040.7 230.6M-652.7 620.8L3130.0 234.6M-800.2 699.2L3225.4 238.9M-1000.9 805.9L3327.5 243.5M-1290.0 959.7L3437.0 248.4M-1742.5 1200.3L3554.7 253.7M-2551.5 1630.5L3681.7 259.4M-4411.9 2619.8L3819.0 265.6M-42.5 296.3L-4411.9 2619.8M58.2 292.0L-2326.3 2023.2M154.3 287.9L-1041.2 1655.7M246.2 284.0L-170.0 1406.5M334.2 280.2L459.6 1226.4M418.6 276.6L935.8 1090.2M499.5 273.2L1308.6 983.6M577.1 269.9L1608.4 897.8M651.7 266.7L1854.7 827.4M723.4 263.6L2060.7 768.5M792.4 260.7L2235.4 718.5M858.8 257.8L2385.6 675.5M922.8 255.1L2516.0 638.2M984.5 252.5L2630.4 605.5M1044.1 249.9L2731.4 576.6M1101.5 247.5L2821.4 550.9M1157.1 245.1L2902.0 527.8M1210.8 242.8L2974.6 507.1M1262.7 240.6L3040.3 488.3M1312.9 238.5L3100.2 471.1M1361.5 236.4L3154.9 455.5M1408.6 234.4L3205.0 441.2M1454.3 232.4L3251.2 427.9M1498.6 230.6L3293.9 415.7M1541.5 228.7L3333.4 404.4M1583.2 226.9L3370.2 393.9M1623.7 225.2L3404.4 384.1M1663.0 223.5L3436.3 375.0M1701.2 221.9L3466.2 366.5M1738.3 220.3L3494.3 358.4M1774.4 218.8L3520.6 350.9M1809.6 217.3L3545.4 343.8M1843.8 215.8L3568.8 337.1M1877.1 214.4L3590.9 330.8M1909.5 213.0L3611.9 324.8M1941.1 211.7L3631.7 319.1M1971.9 210.4L3650.5 313.7M2001.9 209.1L3668.4 308.6M2031.2 207.8L3685.4 303.8M2059.8 206.6L3701.6 299.1M2087.7 205.4L3717.1 294.7M2114.9 204.3L3731.8 290.5M2141.5 203.1L3745.9 286.5M2167.4 202.0L3759.4 282.6M2192.8 200.9L3772.3 278.9M2217.5 199.9L3784.7 275.4M2241.8 198.9L3796.6 272.0M2265.4 197.8L3808.0 268.7M2288.6 196.9L3819.0 265.6" stroke="url(#gg)" stroke-width="1" fill="none"/><defs><filter id="b1" filterUnits="userSpaceOnUse" x="600" y="60" width="950" height="950"><feGaussianBlur stdDeviation="1"/></filter><filter id="b2" filterUnits="userSpaceOnUse" x="600" y="60" width="950" height="950"><feGaussianBlur stdDeviation="2"/></filter><filter id="b3" filterUnits="userSpaceOnUse" x="600" y="60" width="950" height="950"><feGaussianBlur stdDeviation="3"/></filter><filter id="b4" filterUnits="userSpaceOnUse" x="600" y="60" width="950" height="950"><feGaussianBlur stdDeviation="4"/></filter><filter id="b5" filterUnits="userSpaceOnUse" x="600" y="60" width="950" height="950"><feGaussianBlur stdDeviation="5"/></filter><filter id="b6" filterUnits="userSpaceOnUse" x="600" y="60" width="950" height="950"><feGaussianBlur stdDeviation="6"/></filter><filter id="b8" filterUnits="userSpaceOnUse" x="600" y="60" width="950" height="950"><feGaussianBlur stdDeviation="8"/></filter><filter id="b10" filterUnits="userSpaceOnUse" x="600" y="60" width="950" height="950"><feGaussianBlur stdDeviation="10"/></filter><filter id="b12" filterUnits="userSpaceOnUse" x="600" y="60" width="950" height="950"><feGaussianBlur stdDeviation="12"/></filter><filter id="b16" filterUnits="userSpaceOnUse" x="600" y="60" width="950" height="950"><feGaussianBlur stdDeviation="16"/></filter><filter id="b20" filterUnits="userSpaceOnUse" x="600" y="60" width="950" height="950"><feGaussianBlur stdDeviation="20"/></filter><clipPath id="cHead"><path d="M1149.7 347.2C1156.6 347.2 1164.6 348.7 1170.3 350.7C1176.1 352.6 1180.0 355.7 1184.1 359.0C1188.3 362.2 1192.0 366.3 1195.2 370.0C1198.4 373.7 1201.0 377.1 1203.4 381.0C1205.9 384.9 1208.0 389.3 1209.7 393.4C1211.3 397.6 1212.1 401.5 1213.1 405.9C1214.1 410.2 1215.3 415.7 1215.9 419.7C1216.4 423.6 1216.8 426.3 1216.6 429.3C1216.3 432.4 1215.2 433.7 1214.5 437.9C1213.8 442.1 1212.9 449.4 1212.4 454.5C1212.0 459.5 1212.2 463.7 1211.7 468.3C1211.3 472.9 1210.6 477.2 1209.7 482.1C1208.7 486.9 1207.2 492.9 1206.2 497.2C1205.2 501.6 1204.6 504.7 1203.4 508.3C1202.3 511.8 1200.2 515.0 1199.6 518.6C1199.0 522.2 1201.3 525.1 1200.0 530.0C1198.7 534.9 1200.3 544.7 1192.0 548.0C1183.7 551.3 1162.0 551.7 1150.0 550.0C1138.0 548.3 1128.0 542.7 1120.0 538.0C1112.0 533.3 1105.1 527.4 1102.0 522.0C1098.9 516.6 1101.0 511.0 1101.4 505.5C1101.7 500.0 1103.2 493.4 1104.1 489.0C1105.1 484.5 1107.4 480.7 1106.9 478.6C1106.4 476.6 1103.9 477.8 1101.4 476.6C1098.9 475.3 1094.6 473.6 1091.7 471.0C1088.9 468.5 1086.0 465.3 1084.1 461.4C1082.3 457.5 1081.0 452.2 1080.7 447.6C1080.3 443.0 1081.7 436.4 1082.1 433.8C1082.4 431.2 1081.6 433.3 1082.8 432.1C1083.9 430.9 1088.4 428.6 1089.0 426.6C1089.5 424.5 1086.8 422.9 1086.2 419.7C1085.6 416.4 1085.3 411.4 1085.5 407.2C1085.7 403.1 1086.6 399.0 1087.6 394.8C1088.6 390.7 1089.7 386.6 1091.7 382.4C1093.8 378.3 1096.6 373.9 1100.0 370.0C1103.4 366.1 1107.6 362.2 1112.4 359.0C1117.2 355.7 1122.8 352.6 1129.0 350.7C1135.2 348.7 1142.8 347.2 1149.7 347.2Z"/></clipPath><clipPath id="cShirt"><path d="M1100.0 493.3C1101.9 493.7 1102.9 504.0 1105.4 509.0C1107.9 514.0 1111.4 519.7 1115.0 523.5C1118.7 527.3 1122.7 529.7 1127.1 531.9C1131.5 534.2 1136.8 535.6 1141.6 536.8C1146.4 538.0 1151.7 538.6 1156.1 539.2C1160.5 539.8 1165.5 539.9 1168.2 540.4C1170.8 540.9 1171.5 540.9 1172.0 542.3C1172.6 543.7 1170.9 547.6 1171.3 548.9C1171.8 550.1 1173.9 551.6 1174.7 550.1C1175.5 548.6 1174.4 542.3 1176.2 539.9C1177.9 537.6 1182.0 537.7 1185.1 536.1C1188.2 534.4 1192.5 532.1 1194.8 530.0C1197.1 527.9 1197.9 523.3 1198.9 523.5C1199.8 523.7 1197.8 529.8 1200.3 531.2C1202.9 532.6 1207.8 531.3 1214.1 531.9C1220.4 532.6 1230.2 533.3 1238.2 535.1C1246.3 536.9 1255.2 539.7 1262.4 542.8C1269.7 545.9 1276.1 549.5 1281.7 553.7C1287.4 557.9 1291.8 562.7 1296.2 568.2C1300.7 573.6 1304.9 580.1 1308.3 586.3C1311.7 592.5 1314.4 599.2 1316.8 605.6C1319.2 612.1 1321.3 620.1 1322.8 625.0C1324.3 629.8 1326.9 631.0 1325.7 634.6C1324.5 638.3 1319.7 643.3 1315.6 646.7C1311.5 650.1 1306.3 652.7 1301.1 655.2C1295.8 657.7 1287.6 659.7 1284.2 661.7C1280.7 663.7 1281.7 664.1 1280.5 667.2C1279.3 670.4 1278.5 674.3 1276.9 680.5C1275.3 686.8 1272.7 697.0 1270.9 704.7C1269.0 712.4 1267.7 718.5 1266.0 726.6C1264.3 734.7 1262.2 744.3 1260.6 753.2C1259.0 762.1 1257.5 770.9 1256.6 779.8C1255.7 788.7 1255.3 797.5 1255.3 806.4C1255.3 815.3 1255.5 822.4 1256.6 833.0C1257.7 843.6 1260.9 861.3 1262.0 870.2C1263.1 879.1 1264.2 878.4 1263.3 886.2C1262.4 894.0 1260.6 910.1 1256.6 916.8C1252.6 923.4 1246.7 923.2 1239.4 926.1C1232.1 929.0 1222.5 931.1 1212.8 934.0C1203.0 936.9 1191.6 940.5 1180.9 943.4C1170.2 946.3 1157.8 949.8 1148.9 951.3C1140.0 952.8 1135.7 952.9 1127.7 952.7C1119.7 952.5 1110.0 951.5 1101.1 950.0C1092.2 948.5 1082.5 946.1 1074.5 943.4C1066.5 940.7 1059.0 936.9 1053.2 934.0C1047.4 931.1 1044.1 931.0 1039.9 926.1C1035.7 921.2 1030.7 911.4 1027.9 904.8C1025.2 898.1 1023.8 892.0 1023.4 886.2C1023.0 880.4 1023.9 875.5 1025.3 870.2C1026.7 864.9 1029.9 860.5 1031.9 854.3C1033.9 848.1 1035.7 841.0 1037.2 833.0C1038.8 825.0 1040.3 815.3 1041.2 806.4C1042.1 797.5 1042.8 788.7 1042.6 779.8C1042.4 770.9 1041.7 762.1 1039.9 753.2C1038.1 744.3 1034.3 733.5 1031.9 726.6C1029.5 719.7 1027.3 716.8 1025.6 711.9C1024.0 707.1 1023.3 701.7 1022.0 697.4C1020.7 693.2 1019.5 687.9 1017.9 686.6C1016.3 685.3 1015.1 687.1 1012.3 689.7C1009.6 692.3 1004.3 699.0 1001.5 702.3C998.7 705.6 999.1 709.3 995.4 709.5C991.8 709.7 985.6 705.9 979.7 703.5C973.9 701.1 967.2 698.0 960.4 695.0C953.6 692.0 945.2 688.6 938.7 685.4C932.1 682.1 922.5 680.1 921.3 675.7C920.1 671.3 927.1 666.4 931.4 658.8C935.7 651.1 942.3 638.7 947.1 629.8C951.9 620.9 956.6 612.5 960.4 605.6C964.2 598.8 966.8 593.8 970.1 588.7C973.3 583.7 976.1 578.9 979.7 575.4C983.4 572.0 985.8 570.8 991.8 568.2C997.8 565.6 1007.1 562.7 1016.0 559.7C1024.8 556.7 1036.1 553.3 1045.0 550.1C1053.8 546.8 1062.3 543.4 1069.1 540.4C1076.0 537.4 1082.6 535.4 1086.0 531.9C1089.5 528.5 1088.2 524.1 1089.7 519.9C1091.1 515.6 1092.8 511.0 1094.5 506.6C1096.2 502.1 1098.2 492.9 1100.0 493.3Z"/></clipPath><clipPath id="cLarm"><path d="M928.6 682.3C921.7 688.4 916.2 700.6 909.8 709.3C903.4 717.9 896.9 725.3 890.2 734.3C883.6 743.4 876.8 753.8 870.1 763.6C863.4 773.3 856.6 782.5 849.9 792.8C843.2 803.1 830.1 825.7 829.8 825.4C829.4 825.1 847.5 791.9 847.7 791.0C847.9 790.1 836.3 810.7 831.1 820.0C825.9 829.3 821.4 838.4 816.6 847.0C811.8 855.6 806.6 863.9 802.1 871.8C797.6 879.7 794.2 886.0 789.7 894.6C785.2 903.2 781.4 912.6 775.2 923.6C769.0 934.6 759.1 950.6 752.4 960.8C745.7 971.0 727.1 981.0 735.0 985.0C742.9 989.0 788.1 990.1 800.0 985.0C811.9 979.9 804.2 962.8 806.3 954.6C808.4 946.4 809.0 942.9 812.5 936.0C816.0 929.1 821.8 920.5 827.0 913.2C832.2 906.0 837.3 900.1 843.5 892.5C849.7 884.9 857.3 875.3 864.2 867.7C871.1 860.1 878.0 854.6 884.9 847.0C891.8 839.4 898.7 830.7 905.6 822.1C912.5 813.5 917.6 806.6 926.3 795.2C935.0 783.8 949.9 765.1 957.9 753.8C965.9 742.6 969.8 735.4 974.1 727.8C978.5 720.2 979.6 714.3 983.9 708.3C988.2 702.3 1005.6 698.0 1000.2 692.0C994.7 686.1 963.3 674.1 951.4 672.5C939.5 670.9 935.6 676.2 928.6 682.3Z"/></clipPath><clipPath id="cRarm"><path d="M1322.9 633.7C1331.0 638.0 1335.1 647.2 1341.7 653.5C1348.2 659.9 1355.0 665.5 1362.1 671.7C1369.1 678.0 1377.2 684.6 1384.1 691.0C1391.0 697.5 1397.0 703.4 1403.4 710.3C1409.9 717.2 1416.3 725.1 1422.8 732.4C1429.2 739.8 1435.6 747.1 1442.1 754.5C1448.5 761.8 1454.9 769.2 1461.4 776.6C1467.8 783.9 1474.7 791.7 1480.7 798.6C1486.7 805.5 1493.1 813.3 1497.2 817.9C1501.4 822.5 1504.1 818.4 1505.5 826.2C1506.9 834.0 1506.9 859.5 1505.5 864.8C1504.1 870.1 1499.5 859.8 1497.2 857.9C1494.9 856.1 1495.4 857.2 1491.7 853.8C1488.0 850.3 1481.6 843.2 1475.2 837.2C1468.7 831.3 1460.5 824.4 1453.1 817.9C1445.7 811.5 1439.3 805.5 1431.0 798.6C1422.8 791.7 1412.6 783.4 1403.4 776.6C1394.3 769.7 1384.6 763.2 1375.9 757.2C1367.1 751.3 1358.9 746.7 1351.0 740.7C1343.2 734.7 1335.9 727.8 1329.0 721.4C1322.1 714.9 1315.6 708.5 1309.7 702.1C1303.7 695.6 1298.2 688.7 1293.1 682.8C1288.0 676.8 1283.9 672.6 1279.3 666.2C1274.7 659.8 1263.2 650.6 1265.5 644.1C1267.8 637.7 1283.5 629.3 1293.1 627.6C1302.7 625.8 1314.8 629.3 1322.9 633.7Z"/></clipPath><clipPath id="kL"><path d="M600 680H921V640H1100V1000H600Z"/></clipPath><clipPath id="kR"><path d="M1200 600H1325V635H1560V1000H1200Z"/></clipPath></defs>
<g clip-path="url(#kR)"><path d="M1322.9 633.7C1331.0 638.0 1335.1 647.2 1341.7 653.5C1348.2 659.9 1355.0 665.5 1362.1 671.7C1369.1 678.0 1377.2 684.6 1384.1 691.0C1391.0 697.5 1397.0 703.4 1403.4 710.3C1409.9 717.2 1416.3 725.1 1422.8 732.4C1429.2 739.8 1435.6 747.1 1442.1 754.5C1448.5 761.8 1454.9 769.2 1461.4 776.6C1467.8 783.9 1474.7 791.7 1480.7 798.6C1486.7 805.5 1493.1 813.3 1497.2 817.9C1501.4 822.5 1504.1 818.4 1505.5 826.2C1506.9 834.0 1506.9 859.5 1505.5 864.8C1504.1 870.1 1499.5 859.8 1497.2 857.9C1494.9 856.1 1495.4 857.2 1491.7 853.8C1488.0 850.3 1481.6 843.2 1475.2 837.2C1468.7 831.3 1460.5 824.4 1453.1 817.9C1445.7 811.5 1439.3 805.5 1431.0 798.6C1422.8 791.7 1412.6 783.4 1403.4 776.6C1394.3 769.7 1384.6 763.2 1375.9 757.2C1367.1 751.3 1358.9 746.7 1351.0 740.7C1343.2 734.7 1335.9 727.8 1329.0 721.4C1322.1 714.9 1315.6 708.5 1309.7 702.1C1303.7 695.6 1298.2 688.7 1293.1 682.8C1288.0 676.8 1283.9 672.6 1279.3 666.2C1274.7 659.8 1263.2 650.6 1265.5 644.1C1267.8 637.7 1283.5 629.3 1293.1 627.6C1302.7 625.8 1314.8 629.3 1322.9 633.7Z" fill="#5c0c1a" filter="url(#b2)"/></g>
<g clip-path="url(#cRarm)">
<path d="M1322.9 633.7C1331.0 638.0 1335.1 647.2 1341.7 653.5C1348.2 659.9 1355.0 665.5 1362.1 671.7C1369.1 678.0 1377.2 684.6 1384.1 691.0C1391.0 697.5 1397.0 703.4 1403.4 710.3C1409.9 717.2 1416.3 725.1 1422.8 732.4C1429.2 739.8 1435.6 747.1 1442.1 754.5C1448.5 761.8 1454.9 769.2 1461.4 776.6C1467.8 783.9 1474.7 791.7 1480.7 798.6C1486.7 805.5 1493.1 813.3 1497.2 817.9C1501.4 822.5 1504.1 818.4 1505.5 826.2C1506.9 834.0 1506.9 859.5 1505.5 864.8C1504.1 870.1 1499.5 859.8 1497.2 857.9C1494.9 856.1 1495.4 857.2 1491.7 853.8C1488.0 850.3 1481.6 843.2 1475.2 837.2C1468.7 831.3 1460.5 824.4 1453.1 817.9C1445.7 811.5 1439.3 805.5 1431.0 798.6C1422.8 791.7 1412.6 783.4 1403.4 776.6C1394.3 769.7 1384.6 763.2 1375.9 757.2C1367.1 751.3 1358.9 746.7 1351.0 740.7C1343.2 734.7 1335.9 727.8 1329.0 721.4C1322.1 714.9 1315.6 708.5 1309.7 702.1C1303.7 695.6 1298.2 688.7 1293.1 682.8C1288.0 676.8 1283.9 672.6 1279.3 666.2C1274.7 659.8 1263.2 650.6 1265.5 644.1C1267.8 637.7 1283.5 629.3 1293.1 627.6C1302.7 625.8 1314.8 629.3 1322.9 633.7Z" fill="#b01830" filter="url(#b5)"/>
<path d="M1296 642L1392 730L1495 840" stroke="#c01c34" stroke-width="16" fill="none" filter="url(#b5)"/>
<path d="M1300 642L1350 688" stroke="#cc1e38" stroke-width="12" fill="none" filter="url(#b4)"/>
</g>
<g clip-path="url(#kL)"><path d="M928.6 682.3C921.7 688.4 916.2 700.6 909.8 709.3C903.4 717.9 896.9 725.3 890.2 734.3C883.6 743.4 876.8 753.8 870.1 763.6C863.4 773.3 856.6 782.5 849.9 792.8C843.2 803.1 830.1 825.7 829.8 825.4C829.4 825.1 847.5 791.9 847.7 791.0C847.9 790.1 836.3 810.7 831.1 820.0C825.9 829.3 821.4 838.4 816.6 847.0C811.8 855.6 806.6 863.9 802.1 871.8C797.6 879.7 794.2 886.0 789.7 894.6C785.2 903.2 781.4 912.6 775.2 923.6C769.0 934.6 759.1 950.6 752.4 960.8C745.7 971.0 727.1 981.0 735.0 985.0C742.9 989.0 788.1 990.1 800.0 985.0C811.9 979.9 804.2 962.8 806.3 954.6C808.4 946.4 809.0 942.9 812.5 936.0C816.0 929.1 821.8 920.5 827.0 913.2C832.2 906.0 837.3 900.1 843.5 892.5C849.7 884.9 857.3 875.3 864.2 867.7C871.1 860.1 878.0 854.6 884.9 847.0C891.8 839.4 898.7 830.7 905.6 822.1C912.5 813.5 917.6 806.6 926.3 795.2C935.0 783.8 949.9 765.1 957.9 753.8C965.9 742.6 969.8 735.4 974.1 727.8C978.5 720.2 979.6 714.3 983.9 708.3C988.2 702.3 1005.6 698.0 1000.2 692.0C994.7 686.1 963.3 674.1 951.4 672.5C939.5 670.9 935.6 676.2 928.6 682.3Z" fill="#5c0c1a" filter="url(#b3)"/></g>
<g clip-path="url(#cLarm)">
<path d="M928.6 682.3C921.7 688.4 916.2 700.6 909.8 709.3C903.4 717.9 896.9 725.3 890.2 734.3C883.6 743.4 876.8 753.8 870.1 763.6C863.4 773.3 856.6 782.5 849.9 792.8C843.2 803.1 830.1 825.7 829.8 825.4C829.4 825.1 847.5 791.9 847.7 791.0C847.9 790.1 836.3 810.7 831.1 820.0C825.9 829.3 821.4 838.4 816.6 847.0C811.8 855.6 806.6 863.9 802.1 871.8C797.6 879.7 794.2 886.0 789.7 894.6C785.2 903.2 781.4 912.6 775.2 923.6C769.0 934.6 759.1 950.6 752.4 960.8C745.7 971.0 727.1 981.0 735.0 985.0C742.9 989.0 788.1 990.1 800.0 985.0C811.9 979.9 804.2 962.8 806.3 954.6C808.4 946.4 809.0 942.9 812.5 936.0C816.0 929.1 821.8 920.5 827.0 913.2C832.2 906.0 837.3 900.1 843.5 892.5C849.7 884.9 857.3 875.3 864.2 867.7C871.1 860.1 878.0 854.6 884.9 847.0C891.8 839.4 898.7 830.7 905.6 822.1C912.5 813.5 917.6 806.6 926.3 795.2C935.0 783.8 949.9 765.1 957.9 753.8C965.9 742.6 969.8 735.4 974.1 727.8C978.5 720.2 979.6 714.3 983.9 708.3C988.2 702.3 1005.6 698.0 1000.2 692.0C994.7 686.1 963.3 674.1 951.4 672.5C939.5 670.9 935.6 676.2 928.6 682.3Z" fill="#c01c34" filter="url(#b6)"/>
<path d="M950 690L903 762L853 838L801 930L776 975" stroke="#e8203c" stroke-width="20" fill="none" filter="url(#b6)"/>
<path d="M955 692L920 748L890 790" stroke="#ff2a48" stroke-width="9" fill="none" filter="url(#b4)"/>
<path d="M862 826L810 915" stroke="#fa2844" stroke-width="8" fill="none" filter="url(#b4)" opacity=".8"/>
</g>
<path d="M1040 925L1150 945L1257 916L1264 975L1040 975Z" fill="#6a0c1c"/>
<path d="M1052 925L1150 940L1150 975L1048 975Z" fill="#e0203c" filter="url(#b3)"/>
<path d="M1155 947L1256 918L1261 975L1150 975Z" fill="#d01e38" filter="url(#b3)"/>
<g clip-path="url(#cHead)"><path d="M1149.7 347.2C1156.6 347.2 1164.6 348.7 1170.3 350.7C1176.1 352.6 1180.0 355.7 1184.1 359.0C1188.3 362.2 1192.0 366.3 1195.2 370.0C1198.4 373.7 1201.0 377.1 1203.4 381.0C1205.9 384.9 1208.0 389.3 1209.7 393.4C1211.3 397.6 1212.1 401.5 1213.1 405.9C1214.1 410.2 1215.3 415.7 1215.9 419.7C1216.4 423.6 1216.8 426.3 1216.6 429.3C1216.3 432.4 1215.2 433.7 1214.5 437.9C1213.8 442.1 1212.9 449.4 1212.4 454.5C1212.0 459.5 1212.2 463.7 1211.7 468.3C1211.3 472.9 1210.6 477.2 1209.7 482.1C1208.7 486.9 1207.2 492.9 1206.2 497.2C1205.2 501.6 1204.6 504.7 1203.4 508.3C1202.3 511.8 1200.2 515.0 1199.6 518.6C1199.0 522.2 1201.3 525.1 1200.0 530.0C1198.7 534.9 1200.3 544.7 1192.0 548.0C1183.7 551.3 1162.0 551.7 1150.0 550.0C1138.0 548.3 1128.0 542.7 1120.0 538.0C1112.0 533.3 1105.1 527.4 1102.0 522.0C1098.9 516.6 1101.0 511.0 1101.4 505.5C1101.7 500.0 1103.2 493.4 1104.1 489.0C1105.1 484.5 1107.4 480.7 1106.9 478.6C1106.4 476.6 1103.9 477.8 1101.4 476.6C1098.9 475.3 1094.6 473.6 1091.7 471.0C1088.9 468.5 1086.0 465.3 1084.1 461.4C1082.3 457.5 1081.0 452.2 1080.7 447.6C1080.3 443.0 1081.7 436.4 1082.1 433.8C1082.4 431.2 1081.6 433.3 1082.8 432.1C1083.9 430.9 1088.4 428.6 1089.0 426.6C1089.5 424.5 1086.8 422.9 1086.2 419.7C1085.6 416.4 1085.3 411.4 1085.5 407.2C1085.7 403.1 1086.6 399.0 1087.6 394.8C1088.6 390.7 1089.7 386.6 1091.7 382.4C1093.8 378.3 1096.6 373.9 1100.0 370.0C1103.4 366.1 1107.6 362.2 1112.4 359.0C1117.2 355.7 1122.8 352.6 1129.0 350.7C1135.2 348.7 1142.8 347.2 1149.7 347.2Z" fill="#4e0814"/>
<path d="M1149.7 347.2C1156.6 347.2 1164.6 348.7 1170.3 350.7C1176.1 352.6 1180.0 355.7 1184.1 359.0C1188.3 362.2 1192.0 366.3 1195.2 370.0C1198.4 373.7 1201.0 377.1 1203.4 381.0C1205.9 384.9 1208.0 389.3 1209.7 393.4C1211.3 397.6 1212.1 401.5 1213.1 405.9C1214.1 410.2 1215.3 415.7 1215.9 419.7C1216.4 423.6 1216.8 426.3 1216.6 429.3C1216.3 432.4 1215.2 433.7 1214.5 437.9C1213.8 442.1 1212.9 449.4 1212.4 454.5C1212.0 459.5 1212.2 463.7 1211.7 468.3C1211.3 472.9 1210.6 477.2 1209.7 482.1C1208.7 486.9 1207.2 492.9 1206.2 497.2C1205.2 501.6 1204.6 504.7 1203.4 508.3C1202.3 511.8 1200.2 515.0 1199.6 518.6C1199.0 522.2 1201.3 525.1 1200.0 530.0C1198.7 534.9 1200.3 544.7 1192.0 548.0C1183.7 551.3 1162.0 551.7 1150.0 550.0C1138.0 548.3 1128.0 542.7 1120.0 538.0C1112.0 533.3 1105.1 527.4 1102.0 522.0C1098.9 516.6 1101.0 511.0 1101.4 505.5C1101.7 500.0 1103.2 493.4 1104.1 489.0C1105.1 484.5 1107.4 480.7 1106.9 478.6C1106.4 476.6 1103.9 477.8 1101.4 476.6C1098.9 475.3 1094.6 473.6 1091.7 471.0C1088.9 468.5 1086.0 465.3 1084.1 461.4C1082.3 457.5 1081.0 452.2 1080.7 447.6C1080.3 443.0 1081.7 436.4 1082.1 433.8C1082.4 431.2 1081.6 433.3 1082.8 432.1C1083.9 430.9 1088.4 428.6 1089.0 426.6C1089.5 424.5 1086.8 422.9 1086.2 419.7C1085.6 416.4 1085.3 411.4 1085.5 407.2C1085.7 403.1 1086.6 399.0 1087.6 394.8C1088.6 390.7 1089.7 386.6 1091.7 382.4C1093.8 378.3 1096.6 373.9 1100.0 370.0C1103.4 366.1 1107.6 362.2 1112.4 359.0C1117.2 355.7 1122.8 352.6 1129.0 350.7C1135.2 348.7 1142.8 347.2 1149.7 347.2Z" fill="#98162a" filter="url(#b3)"/>
<ellipse cx="1178" cy="425" rx="40" ry="78" fill="#c81e38" filter="url(#b12)"/>
<ellipse cx="1156" cy="468" rx="34" ry="52" fill="#e2203c" filter="url(#b10)"/>
<ellipse cx="1168" cy="416" rx="12" ry="20" fill="#fc243e" filter="url(#b6)"/>
<ellipse cx="1148" cy="476" rx="15" ry="20" fill="#fc243e" filter="url(#b6)"/>
<ellipse cx="1170" cy="512" rx="16" ry="8" fill="#f4223e" filter="url(#b4)"/>
<path d="M1209 398L1224 398L1224 520L1194 534L1203 500L1209 470Z" fill="#86121f" filter="url(#b3)"/>
<path d="M1105.5 478.6L1115.2 493.1L1126.2 506.9L1140.0 517.9L1156.6 525.9L1174.5 532.4L1184.1 530.3L1174.5 544.1L1098.6 544.1L1098.6 497.2Z" fill="#84121f" filter="url(#b3)"/>
<ellipse cx="1132" cy="531" rx="22" ry="9" fill="#b81a32" filter="url(#b4)" transform="rotate(18 1132 531)"/>
<ellipse cx="1180" cy="522" rx="11" ry="6" fill="#f8243e" filter="url(#b3)"/>
<path d="M1089 435L1083 450L1086 465L1096 474L1105 476L1103 452L1101 435Z" fill="#be1c34" filter="url(#b1)"/>
<path d="M1091 443L1090 455L1096 466L1100 462L1097 448Z" fill="#6a0e1c" filter="url(#b1)"/>
<path d="M1086 440L1084 452L1087 462" stroke="#e8223c" stroke-width="1.500" fill="none" filter="url(#b1)"/>
<path d="M1104 434L1105.500 476" stroke="#8a1424" stroke-width="2.500" filter="url(#b2)"/>
<path d="M1144 447Q1156 440 1170 447Q1158 452 1144 447Z" fill="#86121f" filter="url(#b1)"/>
<path d="M1142 441Q1157 433 1172 442" stroke="#96142a" stroke-width="2.500" fill="none" filter="url(#b1)"/>
<path d="M1148 448Q1157 445 1166 448" stroke="#e8223c" stroke-width="1.200" fill="none" filter="url(#b1)"/>
<path d="M1196 443.500Q1204 438 1213 443.500Q1204 448 1196 443.500Z" fill="#70101e" filter="url(#b1)"/>
<path d="M1194 438Q1204 432 1215 439" stroke="#7c1020" stroke-width="2.500" fill="none" filter="url(#b1)"/>
<path d="M1193 446L1202 476L1196 483L1180 484L1176 478Z" fill="#9c162a" filter="url(#b2)" opacity=".85"/>
<path d="M1177 483Q1188 488 1199 482" stroke="#70101e" stroke-width="2" fill="none" filter="url(#b1)"/>
<path d="M1165 498.500Q1183 499.500 1202 495" stroke="#70101e" stroke-width="1.600" fill="none" filter="url(#b1)"/>
<path d="M1168 492Q1184 491 1198 489" stroke="#b81a32" stroke-width="3" fill="none" filter="url(#b2)" opacity=".7"/>
<path d="M1168 504Q1184 507 1198 501" stroke="#fc2a46" stroke-width="2.500" fill="none" filter="url(#b2)" opacity=".7"/>
</g>
<g clip-path="url(#cShirt)"><path d="M1100.0 493.3C1101.9 493.7 1102.9 504.0 1105.4 509.0C1107.9 514.0 1111.4 519.7 1115.0 523.5C1118.7 527.3 1122.7 529.7 1127.1 531.9C1131.5 534.2 1136.8 535.6 1141.6 536.8C1146.4 538.0 1151.7 538.6 1156.1 539.2C1160.5 539.8 1165.5 539.9 1168.2 540.4C1170.8 540.9 1171.5 540.9 1172.0 542.3C1172.6 543.7 1170.9 547.6 1171.3 548.9C1171.8 550.1 1173.9 551.6 1174.7 550.1C1175.5 548.6 1174.4 542.3 1176.2 539.9C1177.9 537.6 1182.0 537.7 1185.1 536.1C1188.2 534.4 1192.5 532.1 1194.8 530.0C1197.1 527.9 1197.9 523.3 1198.9 523.5C1199.8 523.7 1197.8 529.8 1200.3 531.2C1202.9 532.6 1207.8 531.3 1214.1 531.9C1220.4 532.6 1230.2 533.3 1238.2 535.1C1246.3 536.9 1255.2 539.7 1262.4 542.8C1269.7 545.9 1276.1 549.5 1281.7 553.7C1287.4 557.9 1291.8 562.7 1296.2 568.2C1300.7 573.6 1304.9 580.1 1308.3 586.3C1311.7 592.5 1314.4 599.2 1316.8 605.6C1319.2 612.1 1321.3 620.1 1322.8 625.0C1324.3 629.8 1326.9 631.0 1325.7 634.6C1324.5 638.3 1319.7 643.3 1315.6 646.7C1311.5 650.1 1306.3 652.7 1301.1 655.2C1295.8 657.7 1287.6 659.7 1284.2 661.7C1280.7 663.7 1281.7 664.1 1280.5 667.2C1279.3 670.4 1278.5 674.3 1276.9 680.5C1275.3 686.8 1272.7 697.0 1270.9 704.7C1269.0 712.4 1267.7 718.5 1266.0 726.6C1264.3 734.7 1262.2 744.3 1260.6 753.2C1259.0 762.1 1257.5 770.9 1256.6 779.8C1255.7 788.7 1255.3 797.5 1255.3 806.4C1255.3 815.3 1255.5 822.4 1256.6 833.0C1257.7 843.6 1260.9 861.3 1262.0 870.2C1263.1 879.1 1264.2 878.4 1263.3 886.2C1262.4 894.0 1260.6 910.1 1256.6 916.8C1252.6 923.4 1246.7 923.2 1239.4 926.1C1232.1 929.0 1222.5 931.1 1212.8 934.0C1203.0 936.9 1191.6 940.5 1180.9 943.4C1170.2 946.3 1157.8 949.8 1148.9 951.3C1140.0 952.8 1135.7 952.9 1127.7 952.7C1119.7 952.5 1110.0 951.5 1101.1 950.0C1092.2 948.5 1082.5 946.1 1074.5 943.4C1066.5 940.7 1059.0 936.9 1053.2 934.0C1047.4 931.1 1044.1 931.0 1039.9 926.1C1035.7 921.2 1030.7 911.4 1027.9 904.8C1025.2 898.1 1023.8 892.0 1023.4 886.2C1023.0 880.4 1023.9 875.5 1025.3 870.2C1026.7 864.9 1029.9 860.5 1031.9 854.3C1033.9 848.1 1035.7 841.0 1037.2 833.0C1038.8 825.0 1040.3 815.3 1041.2 806.4C1042.1 797.5 1042.8 788.7 1042.6 779.8C1042.4 770.9 1041.7 762.1 1039.9 753.2C1038.1 744.3 1034.3 733.5 1031.9 726.6C1029.5 719.7 1027.3 716.8 1025.6 711.9C1024.0 707.1 1023.3 701.7 1022.0 697.4C1020.7 693.2 1019.5 687.9 1017.9 686.6C1016.3 685.3 1015.1 687.1 1012.3 689.7C1009.6 692.3 1004.3 699.0 1001.5 702.3C998.7 705.6 999.1 709.3 995.4 709.5C991.8 709.7 985.6 705.9 979.7 703.5C973.9 701.1 967.2 698.0 960.4 695.0C953.6 692.0 945.2 688.6 938.7 685.4C932.1 682.1 922.5 680.1 921.3 675.7C920.1 671.3 927.1 666.4 931.4 658.8C935.7 651.1 942.3 638.7 947.1 629.8C951.9 620.9 956.6 612.5 960.4 605.6C964.2 598.8 966.8 593.8 970.1 588.7C973.3 583.7 976.1 578.9 979.7 575.4C983.4 572.0 985.8 570.8 991.8 568.2C997.8 565.6 1007.1 562.7 1016.0 559.7C1024.8 556.7 1036.1 553.3 1045.0 550.1C1053.8 546.8 1062.3 543.4 1069.1 540.4C1076.0 537.4 1082.6 535.4 1086.0 531.9C1089.5 528.5 1088.2 524.1 1089.7 519.9C1091.1 515.6 1092.8 511.0 1094.5 506.6C1096.2 502.1 1098.2 492.9 1100.0 493.3Z" fill="#3e3f44"/>
<path d="M1100.0 493.3C1101.9 493.7 1102.9 504.0 1105.4 509.0C1107.9 514.0 1111.4 519.7 1115.0 523.5C1118.7 527.3 1122.7 529.7 1127.1 531.9C1131.5 534.2 1136.8 535.6 1141.6 536.8C1146.4 538.0 1151.7 538.6 1156.1 539.2C1160.5 539.8 1165.5 539.9 1168.2 540.4C1170.8 540.9 1171.5 540.9 1172.0 542.3C1172.6 543.7 1170.9 547.6 1171.3 548.9C1171.8 550.1 1173.9 551.6 1174.7 550.1C1175.5 548.6 1174.4 542.3 1176.2 539.9C1177.9 537.6 1182.0 537.7 1185.1 536.1C1188.2 534.4 1192.5 532.1 1194.8 530.0C1197.1 527.9 1197.9 523.3 1198.9 523.5C1199.8 523.7 1197.8 529.8 1200.3 531.2C1202.9 532.6 1207.8 531.3 1214.1 531.9C1220.4 532.6 1230.2 533.3 1238.2 535.1C1246.3 536.9 1255.2 539.7 1262.4 542.8C1269.7 545.9 1276.1 549.5 1281.7 553.7C1287.4 557.9 1291.8 562.7 1296.2 568.2C1300.7 573.6 1304.9 580.1 1308.3 586.3C1311.7 592.5 1314.4 599.2 1316.8 605.6C1319.2 612.1 1321.3 620.1 1322.8 625.0C1324.3 629.8 1326.9 631.0 1325.7 634.6C1324.5 638.3 1319.7 643.3 1315.6 646.7C1311.5 650.1 1306.3 652.7 1301.1 655.2C1295.8 657.7 1287.6 659.7 1284.2 661.7C1280.7 663.7 1281.7 664.1 1280.5 667.2C1279.3 670.4 1278.5 674.3 1276.9 680.5C1275.3 686.8 1272.7 697.0 1270.9 704.7C1269.0 712.4 1267.7 718.5 1266.0 726.6C1264.3 734.7 1262.2 744.3 1260.6 753.2C1259.0 762.1 1257.5 770.9 1256.6 779.8C1255.7 788.7 1255.3 797.5 1255.3 806.4C1255.3 815.3 1255.5 822.4 1256.6 833.0C1257.7 843.6 1260.9 861.3 1262.0 870.2C1263.1 879.1 1264.2 878.4 1263.3 886.2C1262.4 894.0 1260.6 910.1 1256.6 916.8C1252.6 923.4 1246.7 923.2 1239.4 926.1C1232.1 929.0 1222.5 931.1 1212.8 934.0C1203.0 936.9 1191.6 940.5 1180.9 943.4C1170.2 946.3 1157.8 949.8 1148.9 951.3C1140.0 952.8 1135.7 952.9 1127.7 952.7C1119.7 952.5 1110.0 951.5 1101.1 950.0C1092.2 948.5 1082.5 946.1 1074.5 943.4C1066.5 940.7 1059.0 936.9 1053.2 934.0C1047.4 931.1 1044.1 931.0 1039.9 926.1C1035.7 921.2 1030.7 911.4 1027.9 904.8C1025.2 898.1 1023.8 892.0 1023.4 886.2C1023.0 880.4 1023.9 875.5 1025.3 870.2C1026.7 864.9 1029.9 860.5 1031.9 854.3C1033.9 848.1 1035.7 841.0 1037.2 833.0C1038.8 825.0 1040.3 815.3 1041.2 806.4C1042.1 797.5 1042.8 788.7 1042.6 779.8C1042.4 770.9 1041.7 762.1 1039.9 753.2C1038.1 744.3 1034.3 733.5 1031.9 726.6C1029.5 719.7 1027.3 716.8 1025.6 711.9C1024.0 707.1 1023.3 701.7 1022.0 697.4C1020.7 693.2 1019.5 687.9 1017.9 686.6C1016.3 685.3 1015.1 687.1 1012.3 689.7C1009.6 692.3 1004.3 699.0 1001.5 702.3C998.7 705.6 999.1 709.3 995.4 709.5C991.8 709.7 985.6 705.9 979.7 703.5C973.9 701.1 967.2 698.0 960.4 695.0C953.6 692.0 945.2 688.6 938.7 685.4C932.1 682.1 922.5 680.1 921.3 675.7C920.1 671.3 927.1 666.4 931.4 658.8C935.7 651.1 942.3 638.7 947.1 629.8C951.9 620.9 956.6 612.5 960.4 605.6C964.2 598.8 966.8 593.8 970.1 588.7C973.3 583.7 976.1 578.9 979.7 575.4C983.4 572.0 985.8 570.8 991.8 568.2C997.8 565.6 1007.1 562.7 1016.0 559.7C1024.8 556.7 1036.1 553.3 1045.0 550.1C1053.8 546.8 1062.3 543.4 1069.1 540.4C1076.0 537.4 1082.6 535.4 1086.0 531.9C1089.5 528.5 1088.2 524.1 1089.7 519.9C1091.1 515.6 1092.8 511.0 1094.5 506.6C1096.2 502.1 1098.2 492.9 1100.0 493.3Z" fill="#bec0c7" filter="url(#b3)"/>
<path d="M1010 670L1060 690L1080 760L1082 830L1066 900L1010 900Z" fill="#77787f" filter="url(#b12)"/>
<path d="M1024 700L1040 700L1050 780L1046 830L1034 870L1018 870L1034 830L1036 780Z" fill="#5e5f66" filter="url(#b3)"/>
<path d="M1275 690L1248 720L1242 800L1248 880L1275 890Z" fill="#9b9da5" filter="url(#b6)"/>
<path d="M1298 560L1325 640L1290 672L1272 702L1252 690L1268 640Z" fill="#9a9ca4" filter="url(#b8)"/>
<ellipse cx="985" cy="605" rx="36" ry="52" fill="#cfd1d7" filter="url(#b12)" transform="rotate(25 985 605)"/>
<ellipse cx="1120" cy="760" rx="22" ry="120" fill="#c8cad1" filter="url(#b12)"/>
<ellipse cx="1150" cy="560" rx="70" ry="22" fill="#c9cbd2" filter="url(#b10)"/>
<path d="M925 678L990 708L1018 690L1022 722L990 734L915 697Z" fill="#7c7d85" filter="url(#b4)"/>
<path d="M1020 640L1040 700L1022 700Z" fill="#8a8b93" filter="url(#b5)"/>
<path d="M1025.3 870.2C1027.7 873.8 1033.0 884.9 1039.9 891.5C1046.8 898.1 1056.3 905.2 1066.5 910.1C1076.7 915.0 1090.0 918.4 1101.1 920.7C1112.2 923.1 1122.4 924.2 1133.0 924.2C1143.6 924.2 1153.4 922.8 1164.9 920.7C1176.4 918.6 1190.6 914.9 1202.1 911.4C1213.6 907.9 1224.0 904.1 1234.0 899.5C1244.0 894.9 1257.3 886.2 1262.0 883.5" stroke="#d0d2d8" stroke-width="10" fill="none" filter="url(#b3)" transform="translate(0 15)"/>
<path d="M1025.3 870.2C1027.7 873.8 1033.0 884.9 1039.9 891.5C1046.8 898.1 1056.3 905.2 1066.5 910.1C1076.7 915.0 1090.0 918.4 1101.1 920.7C1112.2 923.1 1122.4 924.2 1133.0 924.2C1143.6 924.2 1153.4 922.8 1164.9 920.7C1176.4 918.6 1190.6 914.9 1202.1 911.4C1213.6 907.9 1224.0 904.1 1234.0 899.5C1244.0 894.9 1257.3 886.2 1262.0 883.5" stroke="#85868e" stroke-width="2" fill="none" filter="url(#b1)"/>
<path d="M1025 872L1038 892L1046 925L1020 925Z" fill="#6e6f76" filter="url(#b2)"/>
<path d="M1100 494L1094 520L1088 532" stroke="#94969e" stroke-width="2" fill="none" filter="url(#b1)"/>
<path d="M1088 535Q1110 548 1150 552" stroke="#a2a4ac" stroke-width="1.500" fill="none" filter="url(#b1)"/>
<path d="M1180 550Q1195 545 1200 533" stroke="#a2a4ac" stroke-width="1.500" fill="none" filter="url(#b1)"/>
<path d="M1102 505Q1120 535 1172 543" stroke="#d4d6dc" stroke-width="6" fill="none" filter="url(#b2)"/>
<path d="M1151.300 552.500L1180.300 550.100L1207.300 680.500L1177.400 685.400Z" fill="#c9cbd2" stroke="#55565e" stroke-width="0.800" stroke-dasharray="2 1"/>
<path d="M1155.500 552L1181 685" stroke="#6e7078" stroke-width="0.700" stroke-dasharray="2 1"/>
<path d="M1166 551L1190 683" stroke="#9c9ea6" stroke-width="2" filter="url(#b1)"/>
<path d="M1176 590L1181 612" stroke="#eceef2" stroke-width="2" filter="url(#b1)"/>
</g>
<path d="M1172 543L1175 541L1174.500 549L1171.500 549Z" fill="#5a1018"/><rect x="790.5" y="115.5" width="560" height="841" fill="none" stroke="#fff" stroke-width="2"/><text x="795" y="130" font-family="Liberation Sans, sans-serif" font-size="10.5" fill="#fff" letter-spacing="0.4">2 : 3</text><defs><radialGradient id="sph" cx="0.38" cy="0.32" r="0.75"><stop offset="0" stop-color="#fff"/><stop offset="0.45" stop-color="#bdbdbd"/><stop offset="1" stop-color="#4a4a4a"/></radialGradient></defs>
<circle cx="1294.700" cy="124.200" r="9.200" fill="url(#sph)"/><path d="M1290 119A7 7 0 0 1 1301 121" stroke="#fff" stroke-width="1.600" fill="none"/><path d="M1287.500 129A9 9 0 0 0 1303 127" stroke="#e8e8e8" stroke-width="1.200" fill="none"/>
<path d="M1303 133.500H1310L1306.500 139Z" fill="#fff"/>
<rect x="1313" y="115" width="152" height="24" rx="6" fill="#484848"/>
<path d="M1320.500 119.800H1329.500V132H1320.500ZM1325 119.800V132M1320.500 125.500H1329.500" fill="none" stroke="#f2f2f2" stroke-width="1.400"/><path d="M1318.500 133.300H1331.500" stroke="#f2f2f2" stroke-width="2"/>
<text x="1337.300" y="131" font-family="Liberation Sans, sans-serif" font-size="11" font-weight="700" fill="#f4f4f4" letter-spacing="0.46">Perspective View</text>
<rect x="1441" y="118.500" width="1" height="17" fill="#6e6e6e"/>
<path d="M1447.400 124.800H1455.600L1451.500 131.200Z" fill="#f4f4f4"/>
<path d="M1472.500 119L1478 121.700L1472.500 124.400Z" fill="#fff"/><path d="M1479 122H1487.500M1475.500 125.300H1487.500M1474.500 128.500H1487.500M1474.500 131.500H1487.500" stroke="#fff" stroke-width="1.200"/>
<g opacity="0.88">
<path d="M1386.300 172.300L1412.300 166.900L1447.400 175L1406.400 181.200Z" fill="#2f7236"/>
<path d="M1386.300 172.300L1406.400 181.200V224.700L1387.100 213.800Z" fill="#a8574a"/>
<path d="M1406.400 181.200L1447.400 175V220.500L1406.400 224.700Z" fill="#7a7adc"/>
<text x="1412" y="207" font-family="Liberation Sans, sans-serif" font-size="12" fill="#55559a" transform="rotate(-6 1412 207)">Front</text>
<text x="1390" y="204" font-family="Liberation Sans, sans-serif" font-size="9" fill="#7c4038" transform="skewY(28) translate(0 -738)">Left</text>
<g fill="none" stroke="#56564a" stroke-width="0.900"><ellipse cx="1417" cy="197" rx="38" ry="8"/><ellipse cx="1417" cy="197" rx="34" ry="36" /><ellipse cx="1417" cy="197" rx="9" ry="37" transform="rotate(-12 1417 197)"/><ellipse cx="1417" cy="197" rx="36" ry="14" transform="rotate(75 1417 197)"/></g>
</g>
<circle cx="1481" cy="149.500" r="3" fill="#fff"/><path d="M1474 152.500C1468 155 1470 160 1480 160C1488 160 1491 157.500 1489 155" fill="none" stroke="#fff" stroke-width="2.300"/><path d="M1485.500 152.500L1492 154.500L1488 160Z" fill="#fff"/>
<path d="M1480.4 174.2V188.2M1473.4 181.2H1487.4" stroke="#fff" stroke-width="2.400"/>
<path d="M1480.4 170.2l4.200 5h-8.400ZM1480.4 192.2l4.200 -5h-8.400ZM1469.4 181.2l5 -4.200v8.400ZM1491.4 181.2l-5 -4.200v8.400Z" fill="#fff"/>
<circle cx="1484" cy="204.500" r="5.800" fill="none" stroke="#fff" stroke-width="2.200"/><path d="M1479.800 209L1471.500 217" stroke="#fff" stroke-width="3.200" stroke-linecap="round"/>
<path d="M1471.500 231V226.500H1476M1485 226.500H1489.500V231M1489.500 240V244.500H1485M1476 244.500H1471.500V240" fill="none" stroke="#fff" stroke-width="1.800"/><path d="M1477.500 235.300H1483.500M1480.500 232.300V238.300" stroke="#fff" stroke-width="1.800"/>
<circle cx="1480.400" cy="262" r="9.600" fill="#fff"/><path d="M1480.400 255.500L1486 262H1482.500V268.500H1478.300V262H1474.800Z" fill="#000"/></svg></div>

<div class="pane" style="left:1511px;top:79px;width:363px;height:894px"></div>
<div class="menubtn" style="border-left:1px solid #8c8c8c;left:1514px;top:82px"><svg class="a" style="left:5px;top:6px" width="15" height="12" viewBox="0 0 15 12"><path d="M0 0L5 2.5L0 5Z" fill="#444"/><path d="M6 2.5H14M3 5.5H14M2 8.5H14M2 11.5H14" stroke="#444" stroke-width="1"/></svg></div>
<div class="a" style="left:1538.500px;top:82px;width:333.500px;height:887.500px;background:#4c4c4c;border-radius:6px 6px 5px 5px;overflow:hidden">
  <div class="a" style="left:0;top:25px;width:334px;height:26px;background:#878787"></div>
  <div class="a" style="left:0;top:24.500px;width:334px;height:1px;background:#6a6a6a"></div>
  <div class="a" style="left:1.500px;top:51px;width:140.500px;height:801px;background:#808080"></div>
  <div class="a" style="left:147px;top:51px;width:183px;height:36px;background:#cfcfcf"></div>
  <div class="a" style="left:147px;top:87px;width:183px;height:765px;background:#fff"></div>
  <div class="a" style="left:177px;top:57px;width:149px;height:24px;background:#8a8a8a;border-radius:6px"></div>
</div>
<div class="a" style="left:1548.500px;top:89.500px;font-size:11px;font-weight:700;color:#8e8e8e;letter-spacing:0.460px">Presets</div>
<div class="a" style="left:1605px;top:87px;width:42.500px;height:16.500px;border-radius:4px;background:#f39a14;box-shadow:0 0 2px 1px #7a4a08 inset"></div>
<div class="a" style="left:1610.700px;top:89px;font-size:11px;font-weight:700;color:#3c1408;letter-spacing:-0.100px">Editor</div>
<div class="a" style="left:1660.500px;top:89.500px;font-size:11px;font-weight:700;color:#8e8e8e;letter-spacing:0.170px">Shader Baker</div>
<div class="a" style="left:1544.300px;top:115px;font-size:10.500px;color:#fff">Shader:</div>
<svg class="a" style="left:1690px;top:141px" width="20" height="20" viewBox="0 0 20 20"><circle cx="12" cy="7" r="4.200" fill="#e8e8e8" stroke="#444" stroke-width="1.700"/><path d="M8.800 10.300L3 16" stroke="#444" stroke-width="2.600" stroke-linecap="round"/><path d="M10.500 5.500A2.500 2.500 0 0 1 13.500 5" stroke="#444" stroke-width="0.800" fill="none"/></svg>
<div class="a" style="left:1720.200px;top:252.500px;font-size:17px;font-weight:700;color:#222;white-space:nowrap">What do I do?</div>
<div class="a" style="left:1713px;top:279px;width:127px;height:1.500px;background:#444"></div>
<div class="a tip" style="left:1733px;top:303px"><b>1.</b> Make sure the<br>“Surface Selection<br>Tool” is selected.<br>Main Menus: Tools &gt;<br>Surface Selection.</div>
<div class="a tip" style="left:1733px;top:388px"><b>2.</b> Select a surface<br>on an object in the<br>scene.</div>
<div class="a tip" style="left:1733px;top:443px"><b>3.</b> Select a material<br>group from the list<br>on the left, then<br>adjust the property<br>controls that will<br>show up here.</div>
<svg class="a" style="left:1709px;top:301px" width="14" height="16" viewBox="0 0 14 16"><path d="M3 2.500A6 6 0 0 1 10 5" fill="none" stroke="#c8c8c8" stroke-width="1.600" stroke-dasharray="2 1.500"/><path d="M10.500 6A6 6 0 0 1 8 13.500" fill="none" stroke="#555" stroke-width="1.800" stroke-dasharray="2.500 1.500"/></svg><svg class="a" style="left:1709px;top:386px" width="14" height="16" viewBox="0 0 14 16"><path d="M3 2.500A6 6 0 0 1 10 5" fill="none" stroke="#c8c8c8" stroke-width="1.600" stroke-dasharray="2 1.500"/><path d="M10.500 6A6 6 0 0 1 8 13.500" fill="none" stroke="#555" stroke-width="1.800" stroke-dasharray="2.500 1.500"/></svg><svg class="a" style="left:1709px;top:441px" width="14" height="16" viewBox="0 0 14 16"><path d="M3 2.500A6 6 0 0 1 10 5" fill="none" stroke="#c8c8c8" stroke-width="1.600" stroke-dasharray="2 1.500"/><path d="M10.500 6A6 6 0 0 1 8 13.500" fill="none" stroke="#555" stroke-width="1.800" stroke-dasharray="2.500 1.500"/></svg>
<div class="a" style="left:1713px;top:558.500px;width:127px;height:1.500px;background:#444"></div>
<svg class="a" style="left:1704px;top:599px" width="18" height="17" viewBox="0 0 18 17"><path d="M1 5.500L16 1.500L16.800 4.300L1.800 8.300Z" fill="#444"/><rect x="1.500" y="8.500" width="15" height="8" fill="#444"/><path d="M3.500 10V15M7 10V15M10.500 10V15M14 10V15" stroke="#fff" stroke-width="1.100" stroke-dasharray="1.200 1.200"/><path d="M4 4.800L6 7M8 3.700L10 6M12 2.700L14 5" stroke="#fff" stroke-width="1"/></svg>
<div class="a" style="left:1731px;top:596.500px;width:117px;height:23.500px;box-sizing:border-box;border:1px solid #4c4c4c;border-radius:5px;background:linear-gradient(#c2c2c2,#8e8e8e)"></div>
<div class="a" style="left:1746.200px;top:601.500px;font-size:11.500px;font-weight:700;color:#2e2e2e;white-space:nowrap">Video: Surfaces</div>
<div class="a" style="left:1544.500px;top:913.500px;width:15px;height:15px;box-sizing:border-box;border:1px solid #9c9c9c;background:#76737e"></div>
<svg class="a" style="left:1545px;top:911px" width="16" height="18" viewBox="0 0 16 18"><path d="M2.500 10.500L6 15L13 5.500" fill="none" stroke="#f5a21c" stroke-width="3.200"/></svg>
<div class="a" style="left:1565px;top:915.500px;font-size:10.800px;color:#fff;white-space:nowrap">Show Sub Items</div>
<svg class="a" style="left:1699px;top:934px" width="10" height="8" viewBox="0 0 10 8"><path d="M1 7.500L5 1.500L9 7.500Z" fill="#fff"/></svg>
<div class="a" style="left:1543px;top:944px;width:34px;height:18px;border-radius:4px;background:#f39a14;box-shadow:0 0 2px 1px #7a4a08 inset"></div>
<div class="a" style="left:1548.500px;top:946.500px;font-size:11.500px;font-weight:700;color:#3c1408">Tips</div>
<div class="a" style="left:1514.500px;top:368.500px;width:24.500px;height:63.500px;background:#4c4c4c;border-radius:9px 0 0 9px"></div>
<div class="vt l" style="left:1519.5px;top:353.0px;color:#555;font-weight:700;letter-spacing:0.00px;font-size:12.0px">Aux Viewport</div><div class="vt l" style="left:1519.5px;top:425.0px;color:#fff;font-weight:700;letter-spacing:0.00px;font-size:12.0px">Surfaces</div><div class="vt l" style="left:1519.5px;top:516.0px;color:#555;font-weight:700;letter-spacing:0.00px;font-size:12.0px">Environment</div><div class="vt l" style="left:1519.5px;top:620.3px;color:#555;font-weight:700;letter-spacing:0.00px;font-size:12.0px">Render Library</div><div class="vt l" style="left:1519.5px;top:731.0px;color:#555;font-weight:700;letter-spacing:0.00px;font-size:12.0px">Render Settings</div><div class="vt l" style="left:1519.5px;top:796.0px;color:#555;font-weight:700;letter-spacing:0.00px;font-size:12.0px">Shaping</div>

<div class="pane" style="left:30px;top:980px;width:1844px;height:28px"></div>
<div class="a" style="left:954.500px;top:983px;width:61px;height:25px;background:#4c4c4c;border-radius:7px 7px 0 0"></div>
<div class="a" style="left:872px;top:989px;font-size:12px;font-weight:700;color:#4f4f4f;white-space:nowrap">aniMate Lite</div>
<div class="a" style="left:961.500px;top:988px;font-size:12px;font-weight:700;color:#fff;white-space:nowrap">Timeline</div>
<div class="menubtn" style="left:1848px;top:983px;border:1px solid #8c8c8c;border-right:none;border-top:none"><svg class="a" style="left:5px;top:8px" width="15" height="12" viewBox="0 0 15 12"><path d="M0 0L5 2.500L0 5Z" fill="#444"/><path d="M6 2.500H14M3 5.500H14M2 8.500H14M2 11.500H14" stroke="#444" stroke-width="1"/></svg></div>
<div class="a" style="left:1471.500px;top:1011.500px;width:197px;height:8px;box-sizing:border-box;border:1.500px solid #7c7c7c;border-radius:5px 5px 0 0"></div><div class="a" style="left:1697.0px;top:1011.500px;width:21px;height:8px;box-sizing:border-box;border:1.500px solid #747474;border-radius:5px 5px 0 0"></div><div class="a" style="left:1720.2px;top:1011.500px;width:21px;height:8px;box-sizing:border-box;border:1.500px solid #747474;border-radius:5px 5px 0 0"></div><div class="a" style="left:1743.4px;top:1011.500px;width:21px;height:8px;box-sizing:border-box;border:1.500px solid #747474;border-radius:5px 5px 0 0"></div><div class="a" style="left:1766.6px;top:1011.500px;width:21px;height:8px;box-sizing:border-box;border:1.500px solid #747474;border-radius:5px 5px 0 0"></div><div class="a" style="left:1789.8px;top:1011.500px;width:21px;height:8px;box-sizing:border-box;border:1.500px solid #747474;border-radius:5px 5px 0 0"></div><div class="a" style="left:1813.0px;top:1011.500px;width:21px;height:8px;box-sizing:border-box;border:1.500px solid #747474;border-radius:5px 5px 0 0"></div><div class="a" style="left:1836.2px;top:1011.500px;width:21px;height:8px;box-sizing:border-box;border:1.500px solid #747474;border-radius:5px 5px 0 0"></div><div class="a" style="left:1859.4px;top:1011.500px;width:21px;height:8px;box-sizing:border-box;border:1.500px solid #747474;border-radius:5px 5px 0 0"></div><div class="a" style="left:1882.6px;top:1011.500px;width:21px;height:8px;box-sizing:border-box;border:1.500px solid #747474;border-radius:5px 5px 0 0"></div>

</body></html>
